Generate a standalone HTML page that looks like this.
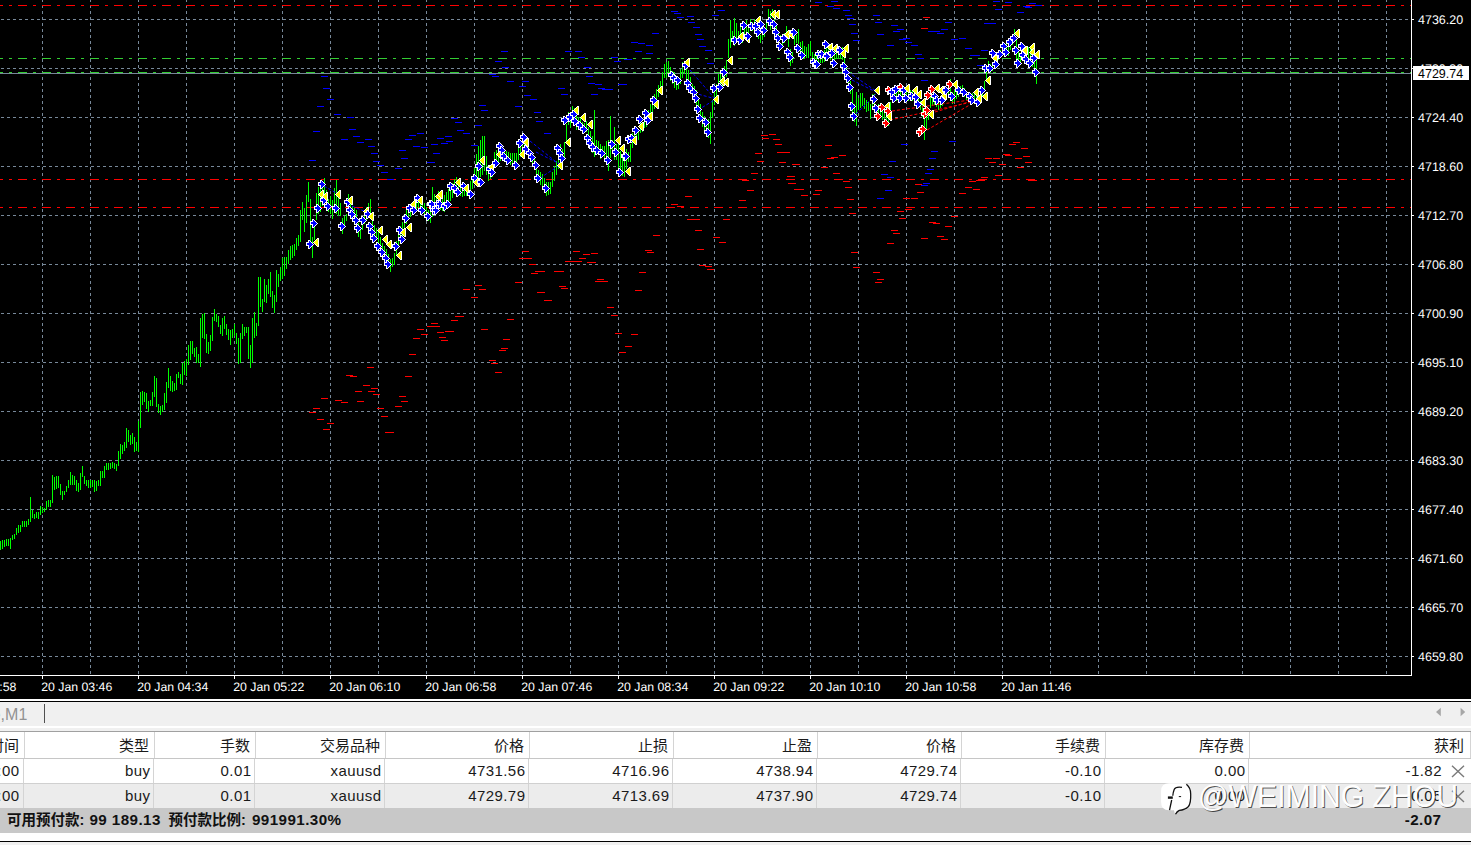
<!DOCTYPE html>
<html lang="zh-CN"><head><meta charset="utf-8"><title>XAUUSD,M1</title>
<style>
html,body{margin:0;padding:0;background:#fff;}
body{width:1471px;height:845px;overflow:hidden;position:relative;font-family:"Liberation Sans","Noto Sans CJK SC",sans-serif;}
.chart{position:absolute;left:0;top:0;display:block}
.chart text{font-family:"Liberation Sans",sans-serif;font-size:12.5px;fill:#fff;}
.chart .lab text{text-rendering:geometricPrecision}
.chart text.bid{fill:#000}
.chart .w{fill:#fff}.chart .b{fill:#00f}.chart .r{fill:#f00}.chart .y{fill:#ff0}
.chart text.tm{font-size:12.3px}
.strip{position:absolute;left:0;width:1471px}
.tab{top:702px;height:24px;background:#f0f0f0}
.tab b{position:absolute;left:-8.3px;top:1.5px;font-weight:normal;font-size:16px;line-height:22px;color:#929292;white-space:nowrap}
.tab b em{font-style:normal;color:#9cc3e6}
.tab i{position:absolute;left:44px;top:2px;width:1px;height:19px;background:#505050}
.hdr{top:732px;height:26px;background:#fff}
.r1{top:759px;height:24px;background:#fff}
.r2{top:784px;height:24px;background:#ececec}
.sum{top:808px;height:25px;background:#c8c8c8}
.vs{position:absolute;top:0;bottom:0;width:1px;background:#d4d4d4}
.hc,.c{position:absolute;white-space:nowrap;color:#1a1a1a;font-size:15px;}
.hc{top:1px;line-height:25px}
.c{top:0;line-height:24px;font-size:15px;letter-spacing:.42px;margin-right:-.42px}
.sum span{position:absolute;top:0;line-height:24px;font-weight:bold;font-size:14.5px;color:#111;white-space:nowrap}
.sum span.n{font-size:15.2px;letter-spacing:.42px}
.wm{position:absolute;left:1197.5px;top:777.5px;font-size:32px;line-height:36px;color:#fff;white-space:nowrap;transform-origin:0 0;transform:scaleX(.942);text-shadow:1px 1px 0 rgba(0,0,0,.7);opacity:.95}
</style></head><body>
<svg class="chart" width="1471" height="699" viewBox="0 0 1471 699" shape-rendering="crispEdges">
<rect width="1471" height="699" fill="#000"/>
<path d="M42.5 -1V674M90.5 -1V674M138.5 -1V674M186.5 -1V674M234.5 -1V674M282.5 -1V674M330.5 -1V674M378.5 -1V674M426.5 -1V674M474.5 -1V674M522.5 -1V674M570.5 -1V674M618.5 -1V674M666.5 -1V674M714.5 -1V674M762.5 -1V674M810.5 -1V674M858.5 -1V674M906.5 -1V674M954.5 -1V674M1002.5 -1V674M1050.5 -1V674M1098.5 -1V674M1146.5 -1V674M1194.5 -1V674M1242.5 -1V674M1290.5 -1V674M1338.5 -1V674M1386.5 -1V674" stroke="#789" stroke-dasharray="3 3" fill="none"/>
<path d="M1 19.5H1408M1 68.5H1408M1 117.5H1408M1 166.5H1408M1 215.5H1408M1 264.5H1408M1 313.5H1408M1 362.5H1408M1 411.5H1408M1 460.5H1408M1 509.5H1408M1 558.5H1408M1 607.5H1408M1 656.5H1408" stroke="#789" stroke-dasharray="3 3" fill="none"/>
<g stroke-dasharray="9 6 3 6" fill="none">
<path d="M-6 5.5H1411M-6 179.5H1411M-6 207.5H1411" stroke="#f00"/>
<path d="M-6 58.5H1411M-6 72.5H1411" stroke="#32cd32"/>
</g>
<path d="M0 73.5H1411" stroke="#789"/>
<path d="M0.5 541V550M2.5 540V549M4.5 540V547M6.5 539V546M8.5 539V546M10.5 538V549M12.5 535V540M14.5 534V539M16.5 528V535M18.5 525V533M20.5 525V532M22.5 521V527M24.5 521V527M26.5 521V527M28.5 519V525M30.5 497V522M32.5 510V518M34.5 514V519M36.5 512V518M38.5 512V519M40.5 506V515M42.5 507V513M44.5 508V512M46.5 501V510M48.5 500V507M50.5 500V507M52.5 475V503M54.5 477V490M56.5 476V489M58.5 476V488M60.5 484V495M62.5 491V500M64.5 491V495M66.5 486V492M68.5 480V488M70.5 472V485M72.5 475V485M74.5 476V485M76.5 480V491M78.5 483V492M80.5 473V490M82.5 466V477M84.5 476V484M86.5 480V486M88.5 480V488M90.5 480V488M92.5 480V487M94.5 480V492M96.5 481V491M98.5 480V486M100.5 471V486M102.5 471V478M104.5 466V478M106.5 463V470M108.5 463V470M110.5 463V469M112.5 462V468M114.5 463V469M116.5 464V471M118.5 451V466M120.5 444V459M122.5 445V454M124.5 442V451M126.5 428V448M128.5 430V442M130.5 435V445M132.5 433V444M134.5 437V452M136.5 442V451M138.5 421V452M140.5 392V428M142.5 391V405M144.5 392V402M146.5 393V409M148.5 401V412M150.5 400V406M152.5 392V406M154.5 376V397M156.5 378V407M158.5 404V413M160.5 406V415M162.5 405V412M164.5 393V410M166.5 382V403M168.5 368V388M170.5 376V391M172.5 381V392M174.5 383V391M176.5 374V390M178.5 372V378M180.5 374V384M182.5 363V385M184.5 361V375M186.5 359V376M188.5 345V365M190.5 341V360M192.5 341V354M194.5 348V357M196.5 347V363M198.5 354V363M200.5 318V367M202.5 314V338M204.5 313V339M206.5 334V353M208.5 342V354M210.5 335V351M212.5 317V341M214.5 309V321M216.5 314V322M218.5 316V327M220.5 325V334M222.5 318V336M224.5 316V329M226.5 324V335M228.5 329V340M230.5 330V345M232.5 329V338M234.5 324V336M236.5 333V344M238.5 338V364M240.5 333V363M242.5 324V339M244.5 327V336M246.5 327V333M248.5 327V359M250.5 345V368M252.5 318V363M254.5 312V338M256.5 323V336M258.5 277V326M260.5 277V307M262.5 299V312M264.5 279V302M266.5 285V303M268.5 279V294M270.5 272V297M272.5 291V308M274.5 295V313M276.5 270V302M278.5 274V287M280.5 267V281M282.5 258V279M284.5 257V276M286.5 257V269M288.5 250V264M290.5 246V260M292.5 245V258M294.5 244V256M296.5 238V250M298.5 235V246M300.5 210V242M302.5 202V220M304.5 208V232M306.5 195V223M308.5 182V202M310.5 199V244M312.5 237V258M314.5 226V240M316.5 193V220M318.5 187V214M320.5 180V212M322.5 188V206M324.5 178V200M326.5 190V208M328.5 199V212M330.5 196V214M332.5 200V219M334.5 188V212M336.5 180V214M338.5 196V216M340.5 203V216M342.5 218V234M344.5 216V226M346.5 214V221M348.5 194V206M350.5 201V212M352.5 206V216M354.5 208V218M356.5 210V222M358.5 223V237M360.5 227V239M362.5 219V230M364.5 211V224M366.5 207V220M368.5 203V218M370.5 199V217M372.5 215V228M374.5 225V237M376.5 228V239M378.5 231V243M380.5 237V248M382.5 243V255M384.5 246V258M386.5 249V262M388.5 254V268M390.5 259V272M392.5 258V267M394.5 253V265M396.5 241V256M398.5 230V248M400.5 226V243M402.5 222V238M404.5 215V230M406.5 209V224M408.5 205V220M410.5 205V217M412.5 203V214M414.5 201V212M416.5 199V210M418.5 197V208M420.5 199V210M422.5 201V212M424.5 203V214M426.5 207V218M428.5 210V221M430.5 212V223M432.5 187V217M434.5 194V211M436.5 195V210M438.5 191V208M440.5 194V210M442.5 196V211M444.5 195V212M446.5 192V207M448.5 189V204M450.5 188V201M452.5 183V198M454.5 179V194M456.5 177V192M458.5 179V194M460.5 182V196M462.5 184V197M464.5 185V196M466.5 185V196M468.5 185V195M470.5 181V192M472.5 178V189M474.5 168V183M476.5 154V182M478.5 146V179M480.5 140V177M482.5 136V175M484.5 136V171M486.5 156V175M488.5 170V181M490.5 168V179M492.5 166V177M494.5 152V168M496.5 150V165M498.5 147V162M500.5 146V161M502.5 147V161M504.5 149V161M506.5 151V162M508.5 152V164M510.5 153V165M512.5 153V166M514.5 153V167M516.5 153V167M518.5 145V160M520.5 142V157M522.5 136V150M524.5 135V148M526.5 141V153M528.5 146V157M530.5 151V161M532.5 155V165M534.5 159V169M536.5 164V175M538.5 170V181M540.5 172V185M542.5 174V189M544.5 178V193M546.5 182V196M548.5 182V195M550.5 182V194M552.5 172V187M554.5 166V181M556.5 161V175M558.5 158V169M560.5 144V155M562.5 149V163M564.5 142V158M566.5 124V143M568.5 112V125M570.5 113V128M572.5 106V114M574.5 108V118M576.5 116V130M578.5 117V126M580.5 118V128M582.5 122V130M584.5 123V130M586.5 121V132M588.5 127V136M590.5 131V140M592.5 136V153M594.5 110V157M596.5 140V155M598.5 141V151M600.5 144V159M602.5 146V155M604.5 146V158M606.5 141V158M608.5 140V171M610.5 116V158M612.5 140V152M614.5 127V160M616.5 144V160M618.5 144V170M620.5 151V172M622.5 155V176M624.5 154V177M626.5 149V169M628.5 152V162M630.5 144V162M632.5 133V148M634.5 131V144M636.5 127V140M638.5 130V140M640.5 121V133M642.5 125V132M644.5 118V128M646.5 122V127M648.5 110V122M650.5 104V119M652.5 98V113M654.5 94V109M656.5 89V102M658.5 85V97M660.5 81V93M662.5 72V86M664.5 64V78M666.5 62V78M668.5 61V75M670.5 67V81M672.5 71V84M674.5 73V88M676.5 76V90M678.5 77V89M680.5 69V84M682.5 62V78M684.5 61V74M686.5 65V80M688.5 70V86M690.5 77V92M692.5 84V98M694.5 86V101M696.5 90V106M698.5 97V112M700.5 104V119M702.5 112V127M704.5 116V132M706.5 120V135M708.5 119V138M710.5 112V144M712.5 100V118M714.5 90V105M716.5 84V98M718.5 74V90M720.5 72V87M722.5 72V86M724.5 66V81M726.5 60V77M728.5 39V58M730.5 20V48M732.5 31V40M734.5 18V46M736.5 23V39M738.5 31V38M740.5 27V36M742.5 32V43M744.5 26V38M746.5 20V34M748.5 26V33M750.5 19V30M752.5 22V31M754.5 19V27M756.5 24V34M758.5 32V39M760.5 35V43M762.5 31V40M764.5 30V37M766.5 20V31M768.5 9V26M770.5 11V30M772.5 9V18M774.5 16V25M776.5 26V30M778.5 32V36M780.5 35V38M782.5 38V48M784.5 33V43M786.5 26V34M788.5 38V47M790.5 49V66M792.5 52V63M794.5 34V45M796.5 35V43M798.5 29V44M800.5 42V55M802.5 41V56M804.5 46V59M806.5 47V58M808.5 44V58M810.5 41V56M812.5 52V64M814.5 54V61M816.5 55V62M818.5 56V63M820.5 53V63M822.5 51V63M824.5 50V62M826.5 47V59M828.5 48V59M830.5 50V60M832.5 51V60M834.5 51V61M836.5 49V59M838.5 48V58M840.5 48V59M842.5 47V60M844.5 58V66M846.5 66V75M848.5 75V85M850.5 81V94M852.5 86V120M854.5 104V122M856.5 92V126M858.5 98V110M860.5 93V108M862.5 93V106M864.5 98V109M866.5 100V112M868.5 102V111M870.5 104V119M872.5 94V109M874.5 94V104M876.5 107V120M878.5 104V116M880.5 107V118M882.5 109V120M884.5 113V123M886.5 108V120M888.5 114V126M890.5 102V111M892.5 93V103M894.5 91V101M896.5 90V101M898.5 89V100M900.5 89V99M902.5 89V100M904.5 90V101M906.5 92V102M908.5 91V101M910.5 90V101M912.5 91V101M914.5 93V103M916.5 95V104M918.5 98V107M920.5 101V110M922.5 105V117M924.5 111V140M926.5 114V129M928.5 108V120M930.5 93V108M932.5 94V106M934.5 95V105M936.5 96V107M938.5 98V110M940.5 97V108M942.5 95V106M944.5 91V102M946.5 89V99M948.5 85V96M950.5 79V93M952.5 92V104M954.5 90V102M956.5 89V99M958.5 88V97M960.5 86V94M962.5 85V95M964.5 88V97M966.5 91V100M968.5 93V101M970.5 93V102M972.5 93V102M974.5 94V103M976.5 96V105M978.5 94V103M980.5 92V102M982.5 88V97M984.5 81V92M986.5 69V79M988.5 61V72M990.5 64V73M992.5 62V71M994.5 59V68M996.5 53V62M998.5 51V60M1000.5 50V58M1002.5 46V55M1004.5 45V54M1006.5 44V54M1008.5 42V56M1010.5 39V50M1012.5 36V45M1014.5 29V41M1016.5 38V67M1018.5 50V65M1020.5 53V65M1022.5 50V60M1024.5 49V57M1026.5 53V61M1028.5 47V64M1030.5 47V62M1032.5 53V67M1034.5 58V69M1036.5 57V84" stroke="#0f0" fill="none"/>
<path d="M321 76.5h7M323 88.5h7M327 99.5h7M317 106.5h7M334 114.5h7M347 117.5h7M349 129.5h7M313 131.5h7M353 136.5h7M341 139.5h7M365 139.5h7M357 142.5h7M368 146.5h7M371 153.5h7M373 161.5h7M377 165.5h7M381 172.5h7M387 179.5h7M309 160.5h7M395 168.5h7M401 158.5h7M399 150.5h7M405 139.5h7M409 135.5h7M417 133.5h7M413 146.5h7M421 147.5h7M427 162.5h7M433 153.5h7M431 144.5h7M437 138.5h7M441 143.5h7M445 136.5h7M451 118.5h7M455 122.5h7M457 130.5h7M463 133.5h7M471 145.5h7M475 125.5h7M479 105.5h7M481 110.5h7M501 51.5h7M495 61.5h7M502 67.5h7M489 74.5h7M492 76.5h7M507 81.5h7M522 81.5h7M519 86.5h7M524 95.5h7M530 99.5h7M515 106.5h7M534 112.5h7M536 121.5h7M544 133.5h7M446 141.5h7M428 162.5h7M565 51.5h7M575 51.5h7M578 57.5h7M584 67.5h7M586 76.5h7M588 83.5h7M595 84.5h7M598 88.5h7M602 89.5h11M591 94.5h7M558 88.5h7M561 94.5h7M611 57.5h7M614 61.5h7M618 84.5h7M624 59.5h7M671 11.5h7M674 13.5h7M687 16.5h7M677 17.5h7M688 22.5h7M693 27.5h7M695 34.5h7M697 39.5h7M699 46.5h7M705 50.5h7M707 63.5h7M652 33.5h7M631 42.5h7M638 43.5h7M646 45.5h7M635 51.5h7M646 53.5h7M625 59.5h7M620 84.5h7M718 10.5h7M712 15.5h7M815 2.5h7M831 1.5h7M827 6.5h7M833 8.5h7M843 10.5h7M845 15.5h7M847 18.5h7M849 24.5h7M851 33.5h7M853 40.5h7M873 15.5h7M875 22.5h7M877 34.5h7M887 45.5h7M891 25.5h7M897 29.5h7M893 31.5h7M899 39.5h7M903 38.5h7M905 42.5h7M911 45.5h7M945 22.5h7M941 29.5h7M928 31.5h12M937 33.5h7M951 39.5h7M959 38.5h7M965 48.5h7M993 1.5h7M1005 2.5h7M1029 3.5h7M1023 6.5h7M1025 7.5h7M1035 5.5h7M995 9.5h7M1017 12.5h7M984 23.5h12M981 50.5h7M970 55.5h10M977 65.5h7M915 54.5h7M917 58.5h7M921 80.5h7M901 144.5h7M949 141.5h7M931 151.5h7M929 158.5h7M889 161.5h7M927 169.5h7M925 173.5h7M881 174.5h7M887 177.5h7M923 183.5h7M921 185.5h7M885 190.5h7M877 198.5h7" stroke="#00f" fill="none"/>
<path d="M522 251.5h7M519 258.5h13M529 264.5h7M535 271.5h7M531 273.5h7M515 282.5h7M537 292.5h7M544 300.5h7M554 271.5h7M475 285.5h7M463 289.5h7M479 289.5h7M471 297.5h7M455 316.5h9M451 320.5h7M431 323.5h7M427 326.5h13M417 329.5h7M437 332.5h7M445 331.5h9M421 334.5h7M439 337.5h7M413 338.5h7M441 340.5h7M409 354.5h7M481 329.5h7M507 319.5h7M503 339.5h7M501 348.5h7M499 350.5h7M489 360.5h7M491 363.5h7M495 372.5h7M367 367.5h7M346 375.5h7M350 376.5h7M405 376.5h7M363 385.5h7M371 388.5h7M355 391.5h7M368 391.5h7M373 394.5h7M399 396.5h7M321 398.5h7M335 400.5h7M341 402.5h7M357 401.5h7M401 401.5h7M395 406.5h7M377 408.5h7M313 408.5h7M309 412.5h7M381 416.5h7M317 419.5h7M327 423.5h7M323 429.5h7M385 432.5h9M761 135.5h7M769 134.5h7M762 138.5h7M773 139.5h7M775 144.5h7M777 152.5h13M755 153.5h7M757 161.5h7M779 162.5h7M792 164.5h7M751 173.5h7M787 176.5h7M786 179.5h9M742 180.5h7M789 183.5h7M794 189.5h7M747 190.5h7M739 200.5h7M685 196.5h7M671 204.5h7M677 206.5h7M723 219.5h7M687 219.5h13M695 230.5h7M713 237.5h7M719 242.5h7M697 249.5h7M653 235.5h7M645 250.5h7M647 252.5h7M573 251.5h7M583 254.5h7M591 253.5h7M579 258.5h7M565 261.5h17M587 262.5h9M699 265.5h7M705 266.5h7M707 269.5h7M557 271.5h7M639 272.5h7M597 279.5h7M595 281.5h13M559 286.5h7M561 288.5h7M635 290.5h7M538 292.5h7M545 300.5h7M607 307.5h7M611 315.5h7M538 271.5h7M615 333.5h7M631 334.5h7M625 346.5h7M619 352.5h7M825 145.5h7M839 155.5h7M831 157.5h7M827 158.5h7M793 164.5h7M821 167.5h7M833 173.5h7M788 176.5h7M843 181.5h7M788 183.5h7M845 187.5h7M797 189.5h7M815 190.5h7M813 194.5h7M801 195.5h7M847 199.5h7M849 213.5h7M851 252.5h7M853 267.5h7M873 272.5h7M877 279.5h7M875 282.5h7M915 184.5h7M917 192.5h7M903 198.5h7M911 198.5h7M905 209.5h7M897 211.5h7M899 218.5h7M891 230.5h7M893 233.5h7M887 243.5h7M921 238.5h7M929 222.5h7M933 223.5h7M945 226.5h7M937 236.5h7M941 239.5h7M951 216.5h7M959 193.5h7M965 187.5h7M973 189.5h7M969 181.5h7M976 180.5h9M981 177.5h7M995 175.5h7M985 158.5h7M993 158.5h7M989 162.5h7M999 164.5h7M1003 154.5h7M1005 155.5h7M1009 144.5h7M1013 142.5h7M1021 148.5h7M1023 156.5h7M1015 158.5h7M1025 162.5h7M1017 167.5h7M1028 180.5h9M923 17.5h7M921 28.5h7" stroke="#f00" fill="none"/>
<g stroke-dasharray="3 2" shape-rendering="auto" stroke-width="1"><line x1="892" y1="111" x2="970" y2="100" stroke="#f00"/><line x1="890" y1="120" x2="972" y2="102" stroke="#f00"/><line x1="927" y1="130" x2="973" y2="103" stroke="#f00"/><line x1="935" y1="112" x2="972" y2="101" stroke="#f00"/><line x1="848" y1="72" x2="876" y2="91" stroke="#00f"/><line x1="852" y1="80" x2="876" y2="92" stroke="#00f"/><line x1="856" y1="114" x2="876" y2="94" stroke="#00f"/><line x1="690" y1="70" x2="716" y2="100" stroke="#00f"/><line x1="698" y1="110" x2="716" y2="99" stroke="#00f"/><line x1="694" y1="93" x2="716" y2="99" stroke="#00f"/><line x1="530" y1="141" x2="560" y2="165" stroke="#00f"/><line x1="540" y1="178" x2="560" y2="165" stroke="#00f"/><line x1="536" y1="152" x2="560" y2="164" stroke="#00f"/><line x1="324" y1="186" x2="338" y2="194" stroke="#00f"/><line x1="352" y1="206" x2="366" y2="212" stroke="#00f"/></g>
<path class="w" d="M308 240h2v1h1v1h1v1h1v1h1v1h-1v1h-1v1h-1v1h-1v1h-2v-3h-2v-4h2z"/><path class="b" d="M309 241h1v1h1v1h1v1h1v1h-1v1h-1v1h-1v1h-1v-3h-2v-2h2z"/><path class="w" d="M312 219h2v1h1v1h1v1h1v1h1v1h-1v1h-1v1h-1v1h-1v1h-2v-3h-2v-4h2z"/><path class="b" d="M313 220h1v1h1v1h1v1h1v1h-1v1h-1v1h-1v1h-1v-3h-2v-2h2z"/><path class="w" d="M317 238h2v9h-2v-1h-1v-1h-1v-1h-1v-1h-1v-1h1v-1h1v-1h1v-1h1z"/><path class="y" d="M317 239h1v7h-1v-1h-1v-1h-1v-1h-1v-1h1v-1h1v-1h1z"/><path class="w" d="M316 204h2v1h1v1h1v1h1v1h1v1h-1v1h-1v1h-1v1h-1v1h-2v-3h-2v-4h2z"/><path class="b" d="M317 205h1v1h1v1h1v1h1v1h-1v1h-1v1h-1v1h-1v-3h-2v-2h2z"/><path class="w" d="M322 190h2v9h-2v-1h-1v-1h-1v-1h-1v-1h-1v-1h1v-1h1v-1h1v-1h1z"/><path class="y" d="M322 191h1v7h-1v-1h-1v-1h-1v-1h-1v-1h1v-1h1v-1h1z"/><path class="w" d="M320 180h2v1h1v1h1v1h1v1h1v1h-1v1h-1v1h-1v1h-1v1h-2v-3h-2v-4h2z"/><path class="b" d="M321 181h1v1h1v1h1v1h1v1h-1v1h-1v1h-1v1h-1v-3h-2v-2h2z"/><path class="w" d="M322 196h2v1h1v1h1v1h1v1h1v1h-1v1h-1v1h-1v1h-1v1h-2v-3h-2v-4h2z"/><path class="b" d="M323 197h1v1h1v1h1v1h1v1h-1v1h-1v1h-1v1h-1v-3h-2v-2h2z"/><path class="w" d="M326 192h2v9h-2v-1h-1v-1h-1v-1h-1v-1h-1v-1h1v-1h1v-1h1v-1h1z"/><path class="y" d="M326 193h1v7h-1v-1h-1v-1h-1v-1h-1v-1h1v-1h1v-1h1z"/><path class="w" d="M326 202h2v1h1v1h1v1h1v1h1v1h-1v1h-1v1h-1v1h-1v1h-2v-3h-2v-4h2z"/><path class="b" d="M327 203h1v1h1v1h1v1h1v1h-1v1h-1v1h-1v1h-1v-3h-2v-2h2z"/><path class="w" d="M334 204h2v1h1v1h1v1h1v1h1v1h-1v1h-1v1h-1v1h-1v1h-2v-3h-2v-4h2z"/><path class="b" d="M335 205h1v1h1v1h1v1h1v1h-1v1h-1v1h-1v1h-1v-3h-2v-2h2z"/><path class="w" d="M339 190h2v9h-2v-1h-1v-1h-1v-1h-1v-1h-1v-1h1v-1h1v-1h1v-1h1z"/><path class="y" d="M339 191h1v7h-1v-1h-1v-1h-1v-1h-1v-1h1v-1h1v-1h1z"/><path class="w" d="M340 222h2v1h1v1h1v1h1v1h1v1h-1v1h-1v1h-1v1h-1v1h-2v-3h-2v-4h2z"/><path class="b" d="M341 223h1v1h1v1h1v1h1v1h-1v1h-1v1h-1v1h-1v-3h-2v-2h2z"/><path class="w" d="M346 198h2v1h1v1h1v1h1v1h1v1h-1v1h-1v1h-1v1h-1v1h-2v-3h-2v-4h2z"/><path class="b" d="M347 199h1v1h1v1h1v1h1v1h-1v1h-1v1h-1v1h-1v-3h-2v-2h2z"/><path class="w" d="M348 206h2v1h1v1h1v1h1v1h1v1h-1v1h-1v1h-1v1h-1v1h-2v-3h-2v-4h2z"/><path class="b" d="M349 207h1v1h1v1h1v1h1v1h-1v1h-1v1h-1v1h-1v-3h-2v-2h2z"/><path class="w" d="M351 196h2v9h-2v-1h-1v-1h-1v-1h-1v-1h-1v-1h1v-1h1v-1h1v-1h1z"/><path class="y" d="M351 197h1v7h-1v-1h-1v-1h-1v-1h-1v-1h1v-1h1v-1h1z"/><path class="w" d="M350 210h2v1h1v1h1v1h1v1h1v1h-1v1h-1v1h-1v1h-1v1h-2v-3h-2v-4h2z"/><path class="b" d="M351 211h1v1h1v1h1v1h1v1h-1v1h-1v1h-1v1h-1v-3h-2v-2h2z"/><path class="w" d="M354 216h2v1h1v1h1v1h1v1h1v1h-1v1h-1v1h-1v1h-1v1h-2v-3h-2v-4h2z"/><path class="b" d="M355 217h1v1h1v1h1v1h1v1h-1v1h-1v1h-1v1h-1v-3h-2v-2h2z"/><path class="w" d="M356 224h2v1h1v1h1v1h1v1h1v1h-1v1h-1v1h-1v1h-1v1h-2v-3h-2v-4h2z"/><path class="b" d="M357 225h1v1h1v1h1v1h1v1h-1v1h-1v1h-1v1h-1v-3h-2v-2h2z"/><path class="w" d="M361 216h2v1h1v1h1v1h1v1h1v1h-1v1h-1v1h-1v1h-1v1h-2v-3h-2v-4h2z"/><path class="b" d="M362 217h1v1h1v1h1v1h1v1h-1v1h-1v1h-1v1h-1v-3h-2v-2h2z"/><path class="w" d="M367 207h2v9h-2v-1h-1v-1h-1v-1h-1v-1h-1v-1h1v-1h1v-1h1v-1h1z"/><path class="y" d="M367 208h1v7h-1v-1h-1v-1h-1v-1h-1v-1h1v-1h1v-1h1z"/><path class="w" d="M366 210h2v1h1v1h1v1h1v1h1v1h-1v1h-1v1h-1v1h-1v1h-2v-3h-2v-4h2z"/><path class="b" d="M367 211h1v1h1v1h1v1h1v1h-1v1h-1v1h-1v1h-1v-3h-2v-2h2z"/><path class="w" d="M368 222h2v1h1v1h1v1h1v1h1v1h-1v1h-1v1h-1v1h-1v1h-2v-3h-2v-4h2z"/><path class="b" d="M369 223h1v1h1v1h1v1h1v1h-1v1h-1v1h-1v1h-1v-3h-2v-2h2z"/><path class="w" d="M372 212h2v9h-2v-1h-1v-1h-1v-1h-1v-1h-1v-1h1v-1h1v-1h1v-1h1z"/><path class="y" d="M372 213h1v7h-1v-1h-1v-1h-1v-1h-1v-1h1v-1h1v-1h1z"/><path class="w" d="M370 228h2v1h1v1h1v1h1v1h1v1h-1v1h-1v1h-1v1h-1v1h-2v-3h-2v-4h2z"/><path class="b" d="M371 229h1v1h1v1h1v1h1v1h-1v1h-1v1h-1v1h-1v-3h-2v-2h2z"/><path class="w" d="M372 234h2v1h1v1h1v1h1v1h1v1h-1v1h-1v1h-1v1h-1v1h-2v-3h-2v-4h2z"/><path class="b" d="M373 235h1v1h1v1h1v1h1v1h-1v1h-1v1h-1v1h-1v-3h-2v-2h2z"/><path class="w" d="M376 242h2v1h1v1h1v1h1v1h1v1h-1v1h-1v1h-1v1h-1v1h-2v-3h-2v-4h2z"/><path class="b" d="M377 243h1v1h1v1h1v1h1v1h-1v1h-1v1h-1v1h-1v-3h-2v-2h2z"/><path class="w" d="M381 226h2v9h-2v-1h-1v-1h-1v-1h-1v-1h-1v-1h1v-1h1v-1h1v-1h1z"/><path class="y" d="M381 227h1v7h-1v-1h-1v-1h-1v-1h-1v-1h1v-1h1v-1h1z"/><path class="w" d="M380 248h2v1h1v1h1v1h1v1h1v1h-1v1h-1v1h-1v1h-1v1h-2v-3h-2v-4h2z"/><path class="b" d="M381 249h1v1h1v1h1v1h1v1h-1v1h-1v1h-1v1h-1v-3h-2v-2h2z"/><path class="w" d="M386 235h2v9h-2v-1h-1v-1h-1v-1h-1v-1h-1v-1h1v-1h1v-1h1v-1h1z"/><path class="y" d="M386 236h1v7h-1v-1h-1v-1h-1v-1h-1v-1h1v-1h1v-1h1z"/><path class="w" d="M384 254h2v1h1v1h1v1h1v1h1v1h-1v1h-1v1h-1v1h-1v1h-2v-3h-2v-4h2z"/><path class="b" d="M385 255h1v1h1v1h1v1h1v1h-1v1h-1v1h-1v1h-1v-3h-2v-2h2z"/><path class="w" d="M390 240h2v9h-2v-1h-1v-1h-1v-1h-1v-1h-1v-1h1v-1h1v-1h1v-1h1z"/><path class="y" d="M390 241h1v7h-1v-1h-1v-1h-1v-1h-1v-1h1v-1h1v-1h1z"/><path class="w" d="M386 260h2v1h1v1h1v1h1v1h1v1h-1v1h-1v1h-1v1h-1v1h-2v-3h-2v-4h2z"/><path class="b" d="M387 261h1v1h1v1h1v1h1v1h-1v1h-1v1h-1v1h-1v-3h-2v-2h2z"/><path class="w" d="M394 242h2v1h1v1h1v1h1v1h1v1h-1v1h-1v1h-1v1h-1v1h-2v-3h-2v-4h2z"/><path class="b" d="M395 243h1v1h1v1h1v1h1v1h-1v1h-1v1h-1v1h-1v-3h-2v-2h2z"/><path class="w" d="M400 251h2v9h-2v-1h-1v-1h-1v-1h-1v-1h-1v-1h1v-1h1v-1h1v-1h1z"/><path class="y" d="M400 252h1v7h-1v-1h-1v-1h-1v-1h-1v-1h1v-1h1v-1h1z"/><path class="w" d="M398 226h2v1h1v1h1v1h1v1h1v1h-1v1h-1v1h-1v1h-1v1h-2v-3h-2v-4h2z"/><path class="b" d="M399 227h1v1h1v1h1v1h1v1h-1v1h-1v1h-1v1h-1v-3h-2v-2h2z"/><path class="w" d="M400 235h2v1h1v1h1v1h1v1h1v1h-1v1h-1v1h-1v1h-1v1h-2v-3h-2v-4h2z"/><path class="b" d="M401 236h1v1h1v1h1v1h1v1h-1v1h-1v1h-1v1h-1v-3h-2v-2h2z"/><path class="w" d="M404 228h2v9h-2v-1h-1v-1h-1v-1h-1v-1h-1v-1h1v-1h1v-1h1v-1h1z"/><path class="y" d="M404 229h1v7h-1v-1h-1v-1h-1v-1h-1v-1h1v-1h1v-1h1z"/><path class="w" d="M404 214h2v1h1v1h1v1h1v1h1v1h-1v1h-1v1h-1v1h-1v1h-2v-3h-2v-4h2z"/><path class="b" d="M405 215h1v1h1v1h1v1h1v1h-1v1h-1v1h-1v1h-1v-3h-2v-2h2z"/><path class="w" d="M410 223h2v9h-2v-1h-1v-1h-1v-1h-1v-1h-1v-1h1v-1h1v-1h1v-1h1z"/><path class="y" d="M410 224h1v7h-1v-1h-1v-1h-1v-1h-1v-1h1v-1h1v-1h1z"/><path class="w" d="M408 204h2v1h1v1h1v1h1v1h1v1h-1v1h-1v1h-1v1h-1v1h-2v-3h-2v-4h2z"/><path class="b" d="M409 205h1v1h1v1h1v1h1v1h-1v1h-1v1h-1v1h-1v-3h-2v-2h2z"/><path class="w" d="M414 200h2v9h-2v-1h-1v-1h-1v-1h-1v-1h-1v-1h1v-1h1v-1h1v-1h1z"/><path class="y" d="M414 201h1v7h-1v-1h-1v-1h-1v-1h-1v-1h1v-1h1v-1h1z"/><path class="w" d="M412 206h2v1h1v1h1v1h1v1h1v1h-1v1h-1v1h-1v1h-1v1h-2v-3h-2v-4h2z"/><path class="b" d="M413 207h1v1h1v1h1v1h1v1h-1v1h-1v1h-1v1h-1v-3h-2v-2h2z"/><path class="w" d="M416 194h2v1h1v1h1v1h1v1h1v1h-1v1h-1v1h-1v1h-1v1h-2v-3h-2v-4h2z"/><path class="b" d="M417 195h1v1h1v1h1v1h1v1h-1v1h-1v1h-1v1h-1v-3h-2v-2h2z"/><path class="w" d="M421 196h2v9h-2v-1h-1v-1h-1v-1h-1v-1h-1v-1h1v-1h1v-1h1v-1h1z"/><path class="y" d="M421 197h1v7h-1v-1h-1v-1h-1v-1h-1v-1h1v-1h1v-1h1z"/><path class="w" d="M420 206h2v1h1v1h1v1h1v1h1v1h-1v1h-1v1h-1v1h-1v1h-2v-3h-2v-4h2z"/><path class="b" d="M421 207h1v1h1v1h1v1h1v1h-1v1h-1v1h-1v1h-1v-3h-2v-2h2z"/><path class="w" d="M426 212h2v1h1v1h1v1h1v1h1v1h-1v1h-1v1h-1v1h-1v1h-2v-3h-2v-4h2z"/><path class="b" d="M427 213h1v1h1v1h1v1h1v1h-1v1h-1v1h-1v1h-1v-3h-2v-2h2z"/><path class="w" d="M429 200h2v1h1v1h1v1h1v1h1v1h-1v1h-1v1h-1v1h-1v1h-2v-3h-2v-4h2z"/><path class="b" d="M430 201h1v1h1v1h1v1h1v1h-1v1h-1v1h-1v1h-1v-3h-2v-2h2z"/><path class="w" d="M430 200h2v1h1v1h1v1h1v1h1v1h-1v1h-1v1h-1v1h-1v1h-2v-3h-2v-4h2z"/><path class="b" d="M431 201h1v1h1v1h1v1h1v1h-1v1h-1v1h-1v1h-1v-3h-2v-2h2z"/><path class="w" d="M432 206h2v1h1v1h1v1h1v1h1v1h-1v1h-1v1h-1v1h-1v1h-2v-3h-2v-4h2z"/><path class="b" d="M433 207h1v1h1v1h1v1h1v1h-1v1h-1v1h-1v1h-1v-3h-2v-2h2z"/><path class="w" d="M434 206h2v1h1v1h1v1h1v1h1v1h-1v1h-1v1h-1v1h-1v1h-2v-3h-2v-4h2z"/><path class="b" d="M435 207h1v1h1v1h1v1h1v1h-1v1h-1v1h-1v1h-1v-3h-2v-2h2z"/><path class="w" d="M439 192h2v9h-2v-1h-1v-1h-1v-1h-1v-1h-1v-1h1v-1h1v-1h1v-1h1z"/><path class="y" d="M439 193h1v7h-1v-1h-1v-1h-1v-1h-1v-1h1v-1h1v-1h1z"/><path class="w" d="M436 200h2v1h1v1h1v1h1v1h1v1h-1v1h-1v1h-1v1h-1v1h-2v-3h-2v-4h2z"/><path class="b" d="M437 201h1v1h1v1h1v1h1v1h-1v1h-1v1h-1v1h-1v-3h-2v-2h2z"/><path class="w" d="M441 190h2v9h-2v-1h-1v-1h-1v-1h-1v-1h-1v-1h1v-1h1v-1h1v-1h1z"/><path class="y" d="M441 191h1v7h-1v-1h-1v-1h-1v-1h-1v-1h1v-1h1v-1h1z"/><path class="w" d="M438 200h2v1h1v1h1v1h1v1h1v1h-1v1h-1v1h-1v1h-1v1h-2v-3h-2v-4h2z"/><path class="b" d="M439 201h1v1h1v1h1v1h1v1h-1v1h-1v1h-1v1h-1v-3h-2v-2h2z"/><path class="w" d="M443 202h2v1h1v1h1v1h1v1h1v1h-1v1h-1v1h-1v1h-1v1h-2v-3h-2v-4h2z"/><path class="b" d="M444 203h1v1h1v1h1v1h1v1h-1v1h-1v1h-1v1h-1v-3h-2v-2h2z"/><path class="w" d="M446 200h2v1h1v1h1v1h1v1h1v1h-1v1h-1v1h-1v1h-1v1h-2v-3h-2v-4h2z"/><path class="b" d="M447 201h1v1h1v1h1v1h1v1h-1v1h-1v1h-1v1h-1v-3h-2v-2h2z"/><path class="w" d="M449 182h2v1h1v1h1v1h1v1h1v1h-1v1h-1v1h-1v1h-1v1h-2v-3h-2v-4h2z"/><path class="b" d="M450 183h1v1h1v1h1v1h1v1h-1v1h-1v1h-1v1h-1v-3h-2v-2h2z"/><path class="w" d="M453 184h2v1h1v1h1v1h1v1h1v1h-1v1h-1v1h-1v1h-1v1h-2v-3h-2v-4h2z"/><path class="b" d="M454 185h1v1h1v1h1v1h1v1h-1v1h-1v1h-1v1h-1v-3h-2v-2h2z"/><path class="w" d="M459 178h2v9h-2v-1h-1v-1h-1v-1h-1v-1h-1v-1h1v-1h1v-1h1v-1h1z"/><path class="y" d="M459 179h1v7h-1v-1h-1v-1h-1v-1h-1v-1h1v-1h1v-1h1z"/><path class="w" d="M456 188h2v1h1v1h1v1h1v1h1v1h-1v1h-1v1h-1v1h-1v1h-2v-3h-2v-4h2z"/><path class="b" d="M457 189h1v1h1v1h1v1h1v1h-1v1h-1v1h-1v1h-1v-3h-2v-2h2z"/><path class="w" d="M462 182h2v1h1v1h1v1h1v1h1v1h-1v1h-1v1h-1v1h-1v1h-2v-3h-2v-4h2z"/><path class="b" d="M463 183h1v1h1v1h1v1h1v1h-1v1h-1v1h-1v1h-1v-3h-2v-2h2z"/><path class="w" d="M467 184h2v9h-2v-1h-1v-1h-1v-1h-1v-1h-1v-1h1v-1h1v-1h1v-1h1z"/><path class="y" d="M467 185h1v7h-1v-1h-1v-1h-1v-1h-1v-1h1v-1h1v-1h1z"/><path class="w" d="M469 190h2v1h1v1h1v1h1v1h1v1h-1v1h-1v1h-1v1h-1v1h-2v-3h-2v-4h2z"/><path class="b" d="M470 191h1v1h1v1h1v1h1v1h-1v1h-1v1h-1v1h-1v-3h-2v-2h2z"/><path class="w" d="M473 174h2v1h1v1h1v1h1v1h1v1h-1v1h-1v1h-1v1h-1v1h-2v-3h-2v-4h2z"/><path class="b" d="M474 175h1v1h1v1h1v1h1v1h-1v1h-1v1h-1v1h-1v-3h-2v-2h2z"/><path class="w" d="M477 178h2v9h-2v-1h-1v-1h-1v-1h-1v-1h-1v-1h1v-1h1v-1h1v-1h1z"/><path class="y" d="M477 179h1v7h-1v-1h-1v-1h-1v-1h-1v-1h1v-1h1v-1h1z"/><path class="w" d="M477 162h2v1h1v1h1v1h1v1h1v1h-1v1h-1v1h-1v1h-1v1h-2v-3h-2v-4h2z"/><path class="b" d="M478 163h1v1h1v1h1v1h1v1h-1v1h-1v1h-1v1h-1v-3h-2v-2h2z"/><path class="w" d="M479 178h2v1h1v1h1v1h1v1h1v1h-1v1h-1v1h-1v1h-1v1h-2v-3h-2v-4h2z"/><path class="b" d="M480 179h1v1h1v1h1v1h1v1h-1v1h-1v1h-1v1h-1v-3h-2v-2h2z"/><path class="w" d="M483 156h2v9h-2v-1h-1v-1h-1v-1h-1v-1h-1v-1h1v-1h1v-1h1v-1h1z"/><path class="y" d="M483 157h1v7h-1v-1h-1v-1h-1v-1h-1v-1h1v-1h1v-1h1z"/><path class="w" d="M488 165h2v1h1v1h1v1h1v1h1v1h-1v1h-1v1h-1v1h-1v1h-2v-3h-2v-4h2z"/><path class="b" d="M489 166h1v1h1v1h1v1h1v1h-1v1h-1v1h-1v1h-1v-3h-2v-2h2z"/><path class="w" d="M492 163h2v9h-2v-1h-1v-1h-1v-1h-1v-1h-1v-1h1v-1h1v-1h1v-1h1z"/><path class="y" d="M492 164h1v7h-1v-1h-1v-1h-1v-1h-1v-1h1v-1h1v-1h1z"/><path class="w" d="M490 168h2v1h1v1h1v1h1v1h1v1h-1v1h-1v1h-1v1h-1v1h-2v-3h-2v-4h2z"/><path class="b" d="M491 169h1v1h1v1h1v1h1v1h-1v1h-1v1h-1v1h-1v-3h-2v-2h2z"/><path class="w" d="M494 159h2v1h1v1h1v1h1v1h1v1h-1v1h-1v1h-1v1h-1v1h-2v-3h-2v-4h2z"/><path class="b" d="M495 160h1v1h1v1h1v1h1v1h-1v1h-1v1h-1v1h-1v-3h-2v-2h2z"/><path class="w" d="M500 150h2v9h-2v-1h-1v-1h-1v-1h-1v-1h-1v-1h1v-1h1v-1h1v-1h1z"/><path class="y" d="M500 151h1v7h-1v-1h-1v-1h-1v-1h-1v-1h1v-1h1v-1h1z"/><path class="w" d="M498 142h2v1h1v1h1v1h1v1h1v1h-1v1h-1v1h-1v1h-1v1h-2v-3h-2v-4h2z"/><path class="b" d="M499 143h1v1h1v1h1v1h1v1h-1v1h-1v1h-1v1h-1v-3h-2v-2h2z"/><path class="w" d="M500 146h2v1h1v1h1v1h1v1h1v1h-1v1h-1v1h-1v1h-1v1h-2v-3h-2v-4h2z"/><path class="b" d="M501 147h1v1h1v1h1v1h1v1h-1v1h-1v1h-1v1h-1v-3h-2v-2h2z"/><path class="w" d="M502 152h2v1h1v1h1v1h1v1h1v1h-1v1h-1v1h-1v1h-1v1h-2v-3h-2v-4h2z"/><path class="b" d="M503 153h1v1h1v1h1v1h1v1h-1v1h-1v1h-1v1h-1v-3h-2v-2h2z"/><path class="w" d="M506 156h2v1h1v1h1v1h1v1h1v1h-1v1h-1v1h-1v1h-1v1h-2v-3h-2v-4h2z"/><path class="b" d="M507 157h1v1h1v1h1v1h1v1h-1v1h-1v1h-1v1h-1v-3h-2v-2h2z"/><path class="w" d="M514 161h2v1h1v1h1v1h1v1h1v1h-1v1h-1v1h-1v1h-1v1h-2v-3h-2v-4h2z"/><path class="b" d="M515 162h1v1h1v1h1v1h1v1h-1v1h-1v1h-1v1h-1v-3h-2v-2h2z"/><path class="w" d="M518 139h2v1h1v1h1v1h1v1h1v1h-1v1h-1v1h-1v1h-1v1h-2v-3h-2v-4h2z"/><path class="b" d="M519 140h1v1h1v1h1v1h1v1h-1v1h-1v1h-1v1h-1v-3h-2v-2h2z"/><path class="w" d="M523 150h2v9h-2v-1h-1v-1h-1v-1h-1v-1h-1v-1h1v-1h1v-1h1v-1h1z"/><path class="y" d="M523 151h1v7h-1v-1h-1v-1h-1v-1h-1v-1h1v-1h1v-1h1z"/><path class="w" d="M522 133h2v1h1v1h1v1h1v1h1v1h-1v1h-1v1h-1v1h-1v1h-2v-3h-2v-4h2z"/><path class="b" d="M523 134h1v1h1v1h1v1h1v1h-1v1h-1v1h-1v1h-1v-3h-2v-2h2z"/><path class="w" d="M527 138h2v9h-2v-1h-1v-1h-1v-1h-1v-1h-1v-1h1v-1h1v-1h1v-1h1z"/><path class="y" d="M527 139h1v7h-1v-1h-1v-1h-1v-1h-1v-1h1v-1h1v-1h1z"/><path class="w" d="M524 145h2v1h1v1h1v1h1v1h1v1h-1v1h-1v1h-1v1h-1v1h-2v-3h-2v-4h2z"/><path class="b" d="M525 146h1v1h1v1h1v1h1v1h-1v1h-1v1h-1v1h-1v-3h-2v-2h2z"/><path class="w" d="M528 149h2v1h1v1h1v1h1v1h1v1h-1v1h-1v1h-1v1h-1v1h-2v-3h-2v-4h2z"/><path class="b" d="M529 150h1v1h1v1h1v1h1v1h-1v1h-1v1h-1v1h-1v-3h-2v-2h2z"/><path class="w" d="M530 153h2v1h1v1h1v1h1v1h1v1h-1v1h-1v1h-1v1h-1v1h-2v-3h-2v-4h2z"/><path class="b" d="M531 154h1v1h1v1h1v1h1v1h-1v1h-1v1h-1v1h-1v-3h-2v-2h2z"/><path class="w" d="M534 161h2v1h1v1h1v1h1v1h1v1h-1v1h-1v1h-1v1h-1v1h-2v-3h-2v-4h2z"/><path class="b" d="M535 162h1v1h1v1h1v1h1v1h-1v1h-1v1h-1v1h-1v-3h-2v-2h2z"/><path class="w" d="M536 174h2v1h1v1h1v1h1v1h1v1h-1v1h-1v1h-1v1h-1v1h-2v-3h-2v-4h2z"/><path class="b" d="M537 175h1v1h1v1h1v1h1v1h-1v1h-1v1h-1v1h-1v-3h-2v-2h2z"/><path class="w" d="M544 184h2v1h1v1h1v1h1v1h1v1h-1v1h-1v1h-1v1h-1v1h-2v-3h-2v-4h2z"/><path class="b" d="M545 185h1v1h1v1h1v1h1v1h-1v1h-1v1h-1v1h-1v-3h-2v-2h2z"/><path class="w" d="M556 144h2v1h1v1h1v1h1v1h1v1h-1v1h-1v1h-1v1h-1v1h-2v-3h-2v-4h2z"/><path class="b" d="M557 145h1v1h1v1h1v1h1v1h-1v1h-1v1h-1v1h-1v-3h-2v-2h2z"/><path class="w" d="M558 149h2v1h1v1h1v1h1v1h1v1h-1v1h-1v1h-1v1h-1v1h-2v-3h-2v-4h2z"/><path class="b" d="M559 150h1v1h1v1h1v1h1v1h-1v1h-1v1h-1v1h-1v-3h-2v-2h2z"/><path class="w" d="M561 161h2v9h-2v-1h-1v-1h-1v-1h-1v-1h-1v-1h1v-1h1v-1h1v-1h1z"/><path class="y" d="M561 162h1v7h-1v-1h-1v-1h-1v-1h-1v-1h1v-1h1v-1h1z"/><path class="w" d="M560 154h2v1h1v1h1v1h1v1h1v1h-1v1h-1v1h-1v1h-1v1h-2v-3h-2v-4h2z"/><path class="b" d="M561 155h1v1h1v1h1v1h1v1h-1v1h-1v1h-1v1h-1v-3h-2v-2h2z"/><path class="w" d="M563 116h2v1h1v1h1v1h1v1h1v1h-1v1h-1v1h-1v1h-1v1h-2v-3h-2v-4h2z"/><path class="b" d="M564 117h1v1h1v1h1v1h1v1h-1v1h-1v1h-1v1h-1v-3h-2v-2h2z"/><path class="w" d="M569 138h2v9h-2v-1h-1v-1h-1v-1h-1v-1h-1v-1h1v-1h1v-1h1v-1h1z"/><path class="y" d="M569 139h1v7h-1v-1h-1v-1h-1v-1h-1v-1h1v-1h1v-1h1z"/><path class="w" d="M568 113h2v1h1v1h1v1h1v1h1v1h-1v1h-1v1h-1v1h-1v1h-2v-3h-2v-4h2z"/><path class="b" d="M569 114h1v1h1v1h1v1h1v1h-1v1h-1v1h-1v1h-1v-3h-2v-2h2z"/><path class="w" d="M572 110h2v1h1v1h1v1h1v1h1v1h-1v1h-1v1h-1v1h-1v1h-2v-3h-2v-4h2z"/><path class="b" d="M573 111h1v1h1v1h1v1h1v1h-1v1h-1v1h-1v1h-1v-3h-2v-2h2z"/><path class="w" d="M573 117h2v1h1v1h1v1h1v1h1v1h-1v1h-1v1h-1v1h-1v1h-2v-3h-2v-4h2z"/><path class="b" d="M574 118h1v1h1v1h1v1h1v1h-1v1h-1v1h-1v1h-1v-3h-2v-2h2z"/><path class="w" d="M577 106h2v9h-2v-1h-1v-1h-1v-1h-1v-1h-1v-1h1v-1h1v-1h1v-1h1z"/><path class="y" d="M577 107h1v7h-1v-1h-1v-1h-1v-1h-1v-1h1v-1h1v-1h1z"/><path class="w" d="M578 121h2v1h1v1h1v1h1v1h1v1h-1v1h-1v1h-1v1h-1v1h-2v-3h-2v-4h2z"/><path class="b" d="M579 122h1v1h1v1h1v1h1v1h-1v1h-1v1h-1v1h-1v-3h-2v-2h2z"/><path class="w" d="M584 113h2v9h-2v-1h-1v-1h-1v-1h-1v-1h-1v-1h1v-1h1v-1h1v-1h1z"/><path class="y" d="M584 114h1v7h-1v-1h-1v-1h-1v-1h-1v-1h1v-1h1v-1h1z"/><path class="w" d="M582 125h2v1h1v1h1v1h1v1h1v1h-1v1h-1v1h-1v1h-1v1h-2v-3h-2v-4h2z"/><path class="b" d="M583 126h1v1h1v1h1v1h1v1h-1v1h-1v1h-1v1h-1v-3h-2v-2h2z"/><path class="w" d="M586 134h2v1h1v1h1v1h1v1h1v1h-1v1h-1v1h-1v1h-1v1h-2v-3h-2v-4h2z"/><path class="b" d="M587 135h1v1h1v1h1v1h1v1h-1v1h-1v1h-1v1h-1v-3h-2v-2h2z"/><path class="w" d="M591 120h2v9h-2v-1h-1v-1h-1v-1h-1v-1h-1v-1h1v-1h1v-1h1v-1h1z"/><path class="y" d="M591 121h1v7h-1v-1h-1v-1h-1v-1h-1v-1h1v-1h1v-1h1z"/><path class="w" d="M588 139h2v1h1v1h1v1h1v1h1v1h-1v1h-1v1h-1v1h-1v1h-2v-3h-2v-4h2z"/><path class="b" d="M589 140h1v1h1v1h1v1h1v1h-1v1h-1v1h-1v1h-1v-3h-2v-2h2z"/><path class="w" d="M591 143h2v1h1v1h1v1h1v1h1v1h-1v1h-1v1h-1v1h-1v1h-2v-3h-2v-4h2z"/><path class="b" d="M592 144h1v1h1v1h1v1h1v1h-1v1h-1v1h-1v1h-1v-3h-2v-2h2z"/><path class="w" d="M595 146h2v1h1v1h1v1h1v1h1v1h-1v1h-1v1h-1v1h-1v1h-2v-3h-2v-4h2z"/><path class="b" d="M596 147h1v1h1v1h1v1h1v1h-1v1h-1v1h-1v1h-1v-3h-2v-2h2z"/><path class="w" d="M600 149h2v1h1v1h1v1h1v1h1v1h-1v1h-1v1h-1v1h-1v1h-2v-3h-2v-4h2z"/><path class="b" d="M601 150h1v1h1v1h1v1h1v1h-1v1h-1v1h-1v1h-1v-3h-2v-2h2z"/><path class="w" d="M606 156h2v1h1v1h1v1h1v1h1v1h-1v1h-1v1h-1v1h-1v1h-2v-3h-2v-4h2z"/><path class="b" d="M607 157h1v1h1v1h1v1h1v1h-1v1h-1v1h-1v1h-1v-3h-2v-2h2z"/><path class="w" d="M610 140h2v1h1v1h1v1h1v1h1v1h-1v1h-1v1h-1v1h-1v1h-2v-3h-2v-4h2z"/><path class="b" d="M611 141h1v1h1v1h1v1h1v1h-1v1h-1v1h-1v1h-1v-3h-2v-2h2z"/><path class="w" d="M614 148h2v1h1v1h1v1h1v1h1v1h-1v1h-1v1h-1v1h-1v1h-2v-3h-2v-4h2z"/><path class="b" d="M615 149h1v1h1v1h1v1h1v1h-1v1h-1v1h-1v1h-1v-3h-2v-2h2z"/><path class="w" d="M619 136h2v9h-2v-1h-1v-1h-1v-1h-1v-1h-1v-1h1v-1h1v-1h1v-1h1z"/><path class="y" d="M619 137h1v7h-1v-1h-1v-1h-1v-1h-1v-1h1v-1h1v-1h1z"/><path class="w" d="M618 168h2v1h1v1h1v1h1v1h1v1h-1v1h-1v1h-1v1h-1v1h-2v-3h-2v-4h2z"/><path class="b" d="M619 169h1v1h1v1h1v1h1v1h-1v1h-1v1h-1v1h-1v-3h-2v-2h2z"/><path class="w" d="M623 144h2v9h-2v-1h-1v-1h-1v-1h-1v-1h-1v-1h1v-1h1v-1h1v-1h1z"/><path class="y" d="M623 145h1v7h-1v-1h-1v-1h-1v-1h-1v-1h1v-1h1v-1h1z"/><path class="w" d="M623 152h2v1h1v1h1v1h1v1h1v1h-1v1h-1v1h-1v1h-1v1h-2v-3h-2v-4h2z"/><path class="b" d="M624 153h1v1h1v1h1v1h1v1h-1v1h-1v1h-1v1h-1v-3h-2v-2h2z"/><path class="w" d="M624 152h2v1h1v1h1v1h1v1h1v1h-1v1h-1v1h-1v1h-1v1h-2v-3h-2v-4h2z"/><path class="b" d="M625 153h1v1h1v1h1v1h1v1h-1v1h-1v1h-1v1h-1v-3h-2v-2h2z"/><path class="w" d="M629 167h2v9h-2v-1h-1v-1h-1v-1h-1v-1h-1v-1h1v-1h1v-1h1v-1h1z"/><path class="y" d="M629 168h1v7h-1v-1h-1v-1h-1v-1h-1v-1h1v-1h1v-1h1z"/><path class="w" d="M627 135h2v1h1v1h1v1h1v1h1v1h-1v1h-1v1h-1v1h-1v1h-2v-3h-2v-4h2z"/><path class="b" d="M628 136h1v1h1v1h1v1h1v1h-1v1h-1v1h-1v1h-1v-3h-2v-2h2z"/><path class="w" d="M630 134h2v1h1v1h1v1h1v1h1v1h-1v1h-1v1h-1v1h-1v1h-2v-3h-2v-4h2z"/><path class="b" d="M631 135h1v1h1v1h1v1h1v1h-1v1h-1v1h-1v1h-1v-3h-2v-2h2z"/><path class="w" d="M635 136h2v9h-2v-1h-1v-1h-1v-1h-1v-1h-1v-1h1v-1h1v-1h1v-1h1z"/><path class="y" d="M635 137h1v7h-1v-1h-1v-1h-1v-1h-1v-1h1v-1h1v-1h1z"/><path class="w" d="M634 126h2v1h1v1h1v1h1v1h1v1h-1v1h-1v1h-1v1h-1v1h-2v-3h-2v-4h2z"/><path class="b" d="M635 127h1v1h1v1h1v1h1v1h-1v1h-1v1h-1v1h-1v-3h-2v-2h2z"/><path class="w" d="M638 115h2v1h1v1h1v1h1v1h1v1h-1v1h-1v1h-1v1h-1v1h-2v-3h-2v-4h2z"/><path class="b" d="M639 116h1v1h1v1h1v1h1v1h-1v1h-1v1h-1v1h-1v-3h-2v-2h2z"/><path class="w" d="M642 122h2v9h-2v-1h-1v-1h-1v-1h-1v-1h-1v-1h1v-1h1v-1h1v-1h1z"/><path class="y" d="M642 123h1v7h-1v-1h-1v-1h-1v-1h-1v-1h1v-1h1v-1h1z"/><path class="w" d="M644 109h2v1h1v1h1v1h1v1h1v1h-1v1h-1v1h-1v1h-1v1h-2v-3h-2v-4h2z"/><path class="b" d="M645 110h1v1h1v1h1v1h1v1h-1v1h-1v1h-1v1h-1v-3h-2v-2h2z"/><path class="w" d="M646 116h2v1h1v1h1v1h1v1h1v1h-1v1h-1v1h-1v1h-1v1h-2v-3h-2v-4h2z"/><path class="b" d="M647 117h1v1h1v1h1v1h1v1h-1v1h-1v1h-1v1h-1v-3h-2v-2h2z"/><path class="w" d="M651 112h2v9h-2v-1h-1v-1h-1v-1h-1v-1h-1v-1h1v-1h1v-1h1v-1h1z"/><path class="y" d="M651 113h1v7h-1v-1h-1v-1h-1v-1h-1v-1h1v-1h1v-1h1z"/><path class="w" d="M652 96h2v1h1v1h1v1h1v1h1v1h-1v1h-1v1h-1v1h-1v1h-2v-3h-2v-4h2z"/><path class="b" d="M653 97h1v1h1v1h1v1h1v1h-1v1h-1v1h-1v1h-1v-3h-2v-2h2z"/><path class="w" d="M657 100h2v9h-2v-1h-1v-1h-1v-1h-1v-1h-1v-1h1v-1h1v-1h1v-1h1z"/><path class="y" d="M657 101h1v7h-1v-1h-1v-1h-1v-1h-1v-1h1v-1h1v-1h1z"/><path class="w" d="M661 86h2v9h-2v-1h-1v-1h-1v-1h-1v-1h-1v-1h1v-1h1v-1h1v-1h1z"/><path class="y" d="M661 87h1v7h-1v-1h-1v-1h-1v-1h-1v-1h1v-1h1v-1h1z"/><path class="w" d="M670 71h2v1h1v1h1v1h1v1h1v1h-1v1h-1v1h-1v1h-1v1h-2v-3h-2v-4h2z"/><path class="b" d="M671 72h1v1h1v1h1v1h1v1h-1v1h-1v1h-1v1h-1v-3h-2v-2h2z"/><path class="w" d="M672 74h2v1h1v1h1v1h1v1h1v1h-1v1h-1v1h-1v1h-1v1h-2v-3h-2v-4h2z"/><path class="b" d="M673 75h1v1h1v1h1v1h1v1h-1v1h-1v1h-1v1h-1v-3h-2v-2h2z"/><path class="w" d="M676 76h2v1h1v1h1v1h1v1h1v1h-1v1h-1v1h-1v1h-1v1h-2v-3h-2v-4h2z"/><path class="b" d="M677 77h1v1h1v1h1v1h1v1h-1v1h-1v1h-1v1h-1v-3h-2v-2h2z"/><path class="w" d="M684 61h2v1h1v1h1v1h1v1h1v1h-1v1h-1v1h-1v1h-1v1h-2v-3h-2v-4h2z"/><path class="b" d="M685 62h1v1h1v1h1v1h1v1h-1v1h-1v1h-1v1h-1v-3h-2v-2h2z"/><path class="w" d="M688 58h2v9h-2v-1h-1v-1h-1v-1h-1v-1h-1v-1h1v-1h1v-1h1v-1h1z"/><path class="y" d="M688 59h1v7h-1v-1h-1v-1h-1v-1h-1v-1h1v-1h1v-1h1z"/><path class="w" d="M686 79h2v1h1v1h1v1h1v1h1v1h-1v1h-1v1h-1v1h-1v1h-2v-3h-2v-4h2z"/><path class="b" d="M687 80h1v1h1v1h1v1h1v1h-1v1h-1v1h-1v1h-1v-3h-2v-2h2z"/><path class="w" d="M688 84h2v1h1v1h1v1h1v1h1v1h-1v1h-1v1h-1v1h-1v1h-2v-3h-2v-4h2z"/><path class="b" d="M689 85h1v1h1v1h1v1h1v1h-1v1h-1v1h-1v1h-1v-3h-2v-2h2z"/><path class="w" d="M692 88h2v1h1v1h1v1h1v1h1v1h-1v1h-1v1h-1v1h-1v1h-2v-3h-2v-4h2z"/><path class="b" d="M693 89h1v1h1v1h1v1h1v1h-1v1h-1v1h-1v1h-1v-3h-2v-2h2z"/><path class="w" d="M694 94h2v1h1v1h1v1h1v1h1v1h-1v1h-1v1h-1v1h-1v1h-2v-3h-2v-4h2z"/><path class="b" d="M695 95h1v1h1v1h1v1h1v1h-1v1h-1v1h-1v1h-1v-3h-2v-2h2z"/><path class="w" d="M696 105h2v1h1v1h1v1h1v1h1v1h-1v1h-1v1h-1v1h-1v1h-2v-3h-2v-4h2z"/><path class="b" d="M697 106h1v1h1v1h1v1h1v1h-1v1h-1v1h-1v1h-1v-3h-2v-2h2z"/><path class="w" d="M698 114h2v1h1v1h1v1h1v1h1v1h-1v1h-1v1h-1v1h-1v1h-2v-3h-2v-4h2z"/><path class="b" d="M699 115h1v1h1v1h1v1h1v1h-1v1h-1v1h-1v1h-1v-3h-2v-2h2z"/><path class="w" d="M704 118h2v1h1v1h1v1h1v1h1v1h-1v1h-1v1h-1v1h-1v1h-2v-3h-2v-4h2z"/><path class="b" d="M705 119h1v1h1v1h1v1h1v1h-1v1h-1v1h-1v1h-1v-3h-2v-2h2z"/><path class="w" d="M706 128h2v1h1v1h1v1h1v1h1v1h-1v1h-1v1h-1v1h-1v1h-2v-3h-2v-4h2z"/><path class="b" d="M707 129h1v1h1v1h1v1h1v1h-1v1h-1v1h-1v1h-1v-3h-2v-2h2z"/><path class="w" d="M712 84h2v1h1v1h1v1h1v1h1v1h-1v1h-1v1h-1v1h-1v1h-2v-3h-2v-4h2z"/><path class="b" d="M713 85h1v1h1v1h1v1h1v1h-1v1h-1v1h-1v1h-1v-3h-2v-2h2z"/><path class="w" d="M717 95h2v9h-2v-1h-1v-1h-1v-1h-1v-1h-1v-1h1v-1h1v-1h1v-1h1z"/><path class="y" d="M717 96h1v7h-1v-1h-1v-1h-1v-1h-1v-1h1v-1h1v-1h1z"/><path class="w" d="M718 83h2v1h1v1h1v1h1v1h1v1h-1v1h-1v1h-1v1h-1v1h-2v-3h-2v-4h2z"/><path class="b" d="M719 84h1v1h1v1h1v1h1v1h-1v1h-1v1h-1v1h-1v-3h-2v-2h2z"/><path class="w" d="M723 77h2v9h-2v-1h-1v-1h-1v-1h-1v-1h-1v-1h1v-1h1v-1h1v-1h1z"/><path class="y" d="M723 78h1v7h-1v-1h-1v-1h-1v-1h-1v-1h1v-1h1v-1h1z"/><path class="w" d="M722 68h2v1h1v1h1v1h1v1h1v1h-1v1h-1v1h-1v1h-1v1h-2v-3h-2v-4h2z"/><path class="b" d="M723 69h1v1h1v1h1v1h1v1h-1v1h-1v1h-1v1h-1v-3h-2v-2h2z"/><path class="w" d="M727 78h2v9h-2v-1h-1v-1h-1v-1h-1v-1h-1v-1h1v-1h1v-1h1v-1h1z"/><path class="y" d="M727 79h1v7h-1v-1h-1v-1h-1v-1h-1v-1h1v-1h1v-1h1z"/><path class="w" d="M731 56h2v9h-2v-1h-1v-1h-1v-1h-1v-1h-1v-1h1v-1h1v-1h1v-1h1z"/><path class="y" d="M731 57h1v7h-1v-1h-1v-1h-1v-1h-1v-1h1v-1h1v-1h1z"/><path class="w" d="M733 36h2v1h1v1h1v1h1v1h1v1h-1v1h-1v1h-1v1h-1v1h-2v-3h-2v-4h2z"/><path class="b" d="M734 37h1v1h1v1h1v1h1v1h-1v1h-1v1h-1v1h-1v-3h-2v-2h2z"/><path class="w" d="M738 36h2v1h1v1h1v1h1v1h1v1h-1v1h-1v1h-1v1h-1v1h-2v-3h-2v-4h2z"/><path class="b" d="M739 37h1v1h1v1h1v1h1v1h-1v1h-1v1h-1v1h-1v-3h-2v-2h2z"/><path class="w" d="M742 32h2v9h-2v-1h-1v-1h-1v-1h-1v-1h-1v-1h1v-1h1v-1h1v-1h1z"/><path class="y" d="M742 33h1v7h-1v-1h-1v-1h-1v-1h-1v-1h1v-1h1v-1h1z"/><path class="w" d="M742 21h2v1h1v1h1v1h1v1h1v1h-1v1h-1v1h-1v1h-1v1h-2v-3h-2v-4h2z"/><path class="b" d="M743 22h1v1h1v1h1v1h1v1h-1v1h-1v1h-1v1h-1v-3h-2v-2h2z"/><path class="w" d="M748 34h2v9h-2v-1h-1v-1h-1v-1h-1v-1h-1v-1h1v-1h1v-1h1v-1h1z"/><path class="y" d="M748 35h1v7h-1v-1h-1v-1h-1v-1h-1v-1h1v-1h1v-1h1z"/><path class="w" d="M746 32h2v1h1v1h1v1h1v1h1v1h-1v1h-1v1h-1v1h-1v1h-2v-3h-2v-4h2z"/><path class="b" d="M747 33h1v1h1v1h1v1h1v1h-1v1h-1v1h-1v1h-1v-3h-2v-2h2z"/><path class="w" d="M750 22h2v1h1v1h1v1h1v1h1v1h-1v1h-1v1h-1v1h-1v1h-2v-3h-2v-4h2z"/><path class="b" d="M751 23h1v1h1v1h1v1h1v1h-1v1h-1v1h-1v1h-1v-3h-2v-2h2z"/><path class="w" d="M754 22h2v1h1v1h1v1h1v1h1v1h-1v1h-1v1h-1v1h-1v1h-2v-3h-2v-4h2z"/><path class="b" d="M755 23h1v1h1v1h1v1h1v1h-1v1h-1v1h-1v1h-1v-3h-2v-2h2z"/><path class="w" d="M759 16h2v9h-2v-1h-1v-1h-1v-1h-1v-1h-1v-1h1v-1h1v-1h1v-1h1z"/><path class="y" d="M759 17h1v7h-1v-1h-1v-1h-1v-1h-1v-1h1v-1h1v-1h1z"/><path class="w" d="M756 28h2v1h1v1h1v1h1v1h1v1h-1v1h-1v1h-1v1h-1v1h-2v-3h-2v-4h2z"/><path class="b" d="M757 29h1v1h1v1h1v1h1v1h-1v1h-1v1h-1v1h-1v-3h-2v-2h2z"/><path class="w" d="M759 20h2v1h1v1h1v1h1v1h1v1h-1v1h-1v1h-1v1h-1v1h-2v-3h-2v-4h2z"/><path class="b" d="M760 21h1v1h1v1h1v1h1v1h-1v1h-1v1h-1v1h-1v-3h-2v-2h2z"/><path class="w" d="M762 26h2v1h1v1h1v1h1v1h1v1h-1v1h-1v1h-1v1h-1v1h-2v-3h-2v-4h2z"/><path class="b" d="M763 27h1v1h1v1h1v1h1v1h-1v1h-1v1h-1v1h-1v-3h-2v-2h2z"/><path class="w" d="M768 17h2v1h1v1h1v1h1v1h1v1h-1v1h-1v1h-1v1h-1v1h-2v-3h-2v-4h2z"/><path class="b" d="M769 18h1v1h1v1h1v1h1v1h-1v1h-1v1h-1v1h-1v-3h-2v-2h2z"/><path class="w" d="M774 10h2v9h-2v-1h-1v-1h-1v-1h-1v-1h-1v-1h1v-1h1v-1h1v-1h1z"/><path class="y" d="M774 11h1v7h-1v-1h-1v-1h-1v-1h-1v-1h1v-1h1v-1h1z"/><path class="w" d="M772 20h2v1h1v1h1v1h1v1h1v1h-1v1h-1v1h-1v1h-1v1h-2v-3h-2v-4h2z"/><path class="b" d="M773 21h1v1h1v1h1v1h1v1h-1v1h-1v1h-1v1h-1v-3h-2v-2h2z"/><path class="w" d="M774 28h2v1h1v1h1v1h1v1h1v1h-1v1h-1v1h-1v1h-1v1h-2v-3h-2v-4h2z"/><path class="b" d="M775 29h1v1h1v1h1v1h1v1h-1v1h-1v1h-1v1h-1v-3h-2v-2h2z"/><path class="w" d="M778 10h2v9h-2v-1h-1v-1h-1v-1h-1v-1h-1v-1h1v-1h1v-1h1v-1h1z"/><path class="y" d="M778 11h1v7h-1v-1h-1v-1h-1v-1h-1v-1h1v-1h1v-1h1z"/><path class="w" d="M776 34h2v1h1v1h1v1h1v1h1v1h-1v1h-1v1h-1v1h-1v1h-2v-3h-2v-4h2z"/><path class="b" d="M777 35h1v1h1v1h1v1h1v1h-1v1h-1v1h-1v1h-1v-3h-2v-2h2z"/><path class="w" d="M778 42h2v1h1v1h1v1h1v1h1v1h-1v1h-1v1h-1v1h-1v1h-2v-3h-2v-4h2z"/><path class="b" d="M779 43h1v1h1v1h1v1h1v1h-1v1h-1v1h-1v1h-1v-3h-2v-2h2z"/><path class="w" d="M782 34h2v1h1v1h1v1h1v1h1v1h-1v1h-1v1h-1v1h-1v1h-2v-3h-2v-4h2z"/><path class="b" d="M783 35h1v1h1v1h1v1h1v1h-1v1h-1v1h-1v1h-1v-3h-2v-2h2z"/><path class="w" d="M788 30h2v9h-2v-1h-1v-1h-1v-1h-1v-1h-1v-1h1v-1h1v-1h1v-1h1z"/><path class="y" d="M788 31h1v7h-1v-1h-1v-1h-1v-1h-1v-1h1v-1h1v-1h1z"/><path class="w" d="M786 48h2v1h1v1h1v1h1v1h1v1h-1v1h-1v1h-1v1h-1v1h-2v-3h-2v-4h2z"/><path class="b" d="M787 49h1v1h1v1h1v1h1v1h-1v1h-1v1h-1v1h-1v-3h-2v-2h2z"/><path class="w" d="M792 30h2v9h-2v-1h-1v-1h-1v-1h-1v-1h-1v-1h1v-1h1v-1h1v-1h1z"/><path class="y" d="M792 31h1v7h-1v-1h-1v-1h-1v-1h-1v-1h1v-1h1v-1h1z"/><path class="w" d="M788 53h2v1h1v1h1v1h1v1h1v1h-1v1h-1v1h-1v1h-1v1h-2v-3h-2v-4h2z"/><path class="b" d="M789 54h1v1h1v1h1v1h1v1h-1v1h-1v1h-1v1h-1v-3h-2v-2h2z"/><path class="w" d="M792 28h2v1h1v1h1v1h1v1h1v1h-1v1h-1v1h-1v1h-1v1h-2v-3h-2v-4h2z"/><path class="b" d="M793 29h1v1h1v1h1v1h1v1h-1v1h-1v1h-1v1h-1v-3h-2v-2h2z"/><path class="w" d="M796 44h2v1h1v1h1v1h1v1h1v1h-1v1h-1v1h-1v1h-1v1h-2v-3h-2v-4h2z"/><path class="b" d="M797 45h1v1h1v1h1v1h1v1h-1v1h-1v1h-1v1h-1v-3h-2v-2h2z"/><path class="w" d="M800 51h2v1h1v1h1v1h1v1h1v1h-1v1h-1v1h-1v1h-1v1h-2v-3h-2v-4h2z"/><path class="b" d="M801 52h1v1h1v1h1v1h1v1h-1v1h-1v1h-1v1h-1v-3h-2v-2h2z"/><path class="w" d="M812 58h2v1h1v1h1v1h1v1h1v1h-1v1h-1v1h-1v1h-1v1h-2v-3h-2v-4h2z"/><path class="b" d="M813 59h1v1h1v1h1v1h1v1h-1v1h-1v1h-1v1h-1v-3h-2v-2h2z"/><path class="w" d="M814 60h2v1h1v1h1v1h1v1h1v1h-1v1h-1v1h-1v1h-1v1h-2v-3h-2v-4h2z"/><path class="b" d="M815 61h1v1h1v1h1v1h1v1h-1v1h-1v1h-1v1h-1v-3h-2v-2h2z"/><path class="w" d="M815 60h2v1h1v1h1v1h1v1h1v1h-1v1h-1v1h-1v1h-1v1h-2v-3h-2v-4h2z"/><path class="b" d="M816 61h1v1h1v1h1v1h1v1h-1v1h-1v1h-1v1h-1v-3h-2v-2h2z"/><path class="w" d="M817 50h2v1h1v1h1v1h1v1h1v1h-1v1h-1v1h-1v1h-1v1h-2v-3h-2v-4h2z"/><path class="b" d="M818 51h1v1h1v1h1v1h1v1h-1v1h-1v1h-1v1h-1v-3h-2v-2h2z"/><path class="w" d="M820 50h2v1h1v1h1v1h1v1h1v1h-1v1h-1v1h-1v1h-1v1h-2v-3h-2v-4h2z"/><path class="b" d="M821 51h1v1h1v1h1v1h1v1h-1v1h-1v1h-1v1h-1v-3h-2v-2h2z"/><path class="w" d="M826 52h2v9h-2v-1h-1v-1h-1v-1h-1v-1h-1v-1h1v-1h1v-1h1v-1h1z"/><path class="y" d="M826 53h1v7h-1v-1h-1v-1h-1v-1h-1v-1h1v-1h1v-1h1z"/><path class="w" d="M824 40h2v1h1v1h1v1h1v1h1v1h-1v1h-1v1h-1v1h-1v1h-2v-3h-2v-4h2z"/><path class="b" d="M825 41h1v1h1v1h1v1h1v1h-1v1h-1v1h-1v1h-1v-3h-2v-2h2z"/><path class="w" d="M825 52h2v1h1v1h1v1h1v1h1v1h-1v1h-1v1h-1v1h-1v1h-2v-3h-2v-4h2z"/><path class="b" d="M826 53h1v1h1v1h1v1h1v1h-1v1h-1v1h-1v1h-1v-3h-2v-2h2z"/><path class="w" d="M831 43h2v9h-2v-1h-1v-1h-1v-1h-1v-1h-1v-1h1v-1h1v-1h1v-1h1z"/><path class="y" d="M831 44h1v7h-1v-1h-1v-1h-1v-1h-1v-1h1v-1h1v-1h1z"/><path class="w" d="M830 49h2v1h1v1h1v1h1v1h1v1h-1v1h-1v1h-1v1h-1v1h-2v-3h-2v-4h2z"/><path class="b" d="M831 50h1v1h1v1h1v1h1v1h-1v1h-1v1h-1v1h-1v-3h-2v-2h2z"/><path class="w" d="M832 59h2v1h1v1h1v1h1v1h1v1h-1v1h-1v1h-1v1h-1v1h-2v-3h-2v-4h2z"/><path class="b" d="M833 60h1v1h1v1h1v1h1v1h-1v1h-1v1h-1v1h-1v-3h-2v-2h2z"/><path class="w" d="M836 44h2v9h-2v-1h-1v-1h-1v-1h-1v-1h-1v-1h1v-1h1v-1h1v-1h1z"/><path class="y" d="M836 45h1v7h-1v-1h-1v-1h-1v-1h-1v-1h1v-1h1v-1h1z"/><path class="w" d="M838 46h2v1h1v1h1v1h1v1h1v1h-1v1h-1v1h-1v1h-1v1h-2v-3h-2v-4h2z"/><path class="b" d="M839 47h1v1h1v1h1v1h1v1h-1v1h-1v1h-1v1h-1v-3h-2v-2h2z"/><path class="w" d="M844 49h2v9h-2v-1h-1v-1h-1v-1h-1v-1h-1v-1h1v-1h1v-1h1v-1h1z"/><path class="y" d="M844 50h1v7h-1v-1h-1v-1h-1v-1h-1v-1h1v-1h1v-1h1z"/><path class="w" d="M842 62h2v1h1v1h1v1h1v1h1v1h-1v1h-1v1h-1v1h-1v1h-2v-3h-2v-4h2z"/><path class="b" d="M843 63h1v1h1v1h1v1h1v1h-1v1h-1v1h-1v1h-1v-3h-2v-2h2z"/><path class="w" d="M844 68h2v1h1v1h1v1h1v1h1v1h-1v1h-1v1h-1v1h-1v1h-2v-3h-2v-4h2z"/><path class="b" d="M845 69h1v1h1v1h1v1h1v1h-1v1h-1v1h-1v1h-1v-3h-2v-2h2z"/><path class="w" d="M847 44h2v9h-2v-1h-1v-1h-1v-1h-1v-1h-1v-1h1v-1h1v-1h1v-1h1z"/><path class="y" d="M847 45h1v7h-1v-1h-1v-1h-1v-1h-1v-1h1v-1h1v-1h1z"/><path class="w" d="M846 74h2v1h1v1h1v1h1v1h1v1h-1v1h-1v1h-1v1h-1v1h-2v-3h-2v-4h2z"/><path class="b" d="M847 75h1v1h1v1h1v1h1v1h-1v1h-1v1h-1v1h-1v-3h-2v-2h2z"/><path class="w" d="M848 83h2v1h1v1h1v1h1v1h1v1h-1v1h-1v1h-1v1h-1v1h-2v-3h-2v-4h2z"/><path class="b" d="M849 84h1v1h1v1h1v1h1v1h-1v1h-1v1h-1v1h-1v-3h-2v-2h2z"/><path class="w" d="M850 102h2v1h1v1h1v1h1v1h1v1h-1v1h-1v1h-1v1h-1v1h-2v-3h-2v-4h2z"/><path class="b" d="M851 103h1v1h1v1h1v1h1v1h-1v1h-1v1h-1v1h-1v-3h-2v-2h2z"/><path class="w" d="M852 112h2v1h1v1h1v1h1v1h1v1h-1v1h-1v1h-1v1h-1v1h-2v-3h-2v-4h2z"/><path class="b" d="M853 113h1v1h1v1h1v1h1v1h-1v1h-1v1h-1v1h-1v-3h-2v-2h2z"/><path class="w" d="M872 95h2v1h1v1h1v1h1v1h1v1h-1v1h-1v1h-1v1h-1v1h-2v-3h-2v-4h2z"/><path class="b" d="M873 96h1v1h1v1h1v1h1v1h-1v1h-1v1h-1v1h-1v-3h-2v-2h2z"/><path class="w" d="M874 104h2v1h1v1h1v1h1v1h1v1h-1v1h-1v1h-1v1h-1v1h-2v-3h-2v-4h2z"/><path class="b" d="M875 105h1v1h1v1h1v1h1v1h-1v1h-1v1h-1v1h-1v-3h-2v-2h2z"/><path class="w" d="M878 86h2v9h-2v-1h-1v-1h-1v-1h-1v-1h-1v-1h1v-1h1v-1h1v-1h1z"/><path class="y" d="M878 87h1v7h-1v-1h-1v-1h-1v-1h-1v-1h1v-1h1v-1h1z"/><path class="w" d="M876 112h2v1h1v1h1v1h1v1h1v1h-1v1h-1v1h-1v1h-1v1h-2v-3h-2v-4h2z"/><path class="r" d="M877 113h1v1h1v1h1v1h1v1h-1v1h-1v1h-1v1h-1v-3h-2v-2h2z"/><path class="w" d="M880 103h2v1h1v1h1v1h1v1h1v1h-1v1h-1v1h-1v1h-1v1h-2v-3h-2v-4h2z"/><path class="r" d="M881 104h1v1h1v1h1v1h1v1h-1v1h-1v1h-1v1h-1v-3h-2v-2h2z"/><path class="w" d="M884 119h2v1h1v1h1v1h1v1h1v1h-1v1h-1v1h-1v1h-1v1h-2v-3h-2v-4h2z"/><path class="r" d="M885 120h1v1h1v1h1v1h1v1h-1v1h-1v1h-1v1h-1v-3h-2v-2h2z"/><path class="w" d="M888 102h2v9h-2v-1h-1v-1h-1v-1h-1v-1h-1v-1h1v-1h1v-1h1v-1h1z"/><path class="y" d="M888 103h1v7h-1v-1h-1v-1h-1v-1h-1v-1h1v-1h1v-1h1z"/><path class="w" d="M886 107h2v1h1v1h1v1h1v1h1v1h-1v1h-1v1h-1v1h-1v1h-2v-3h-2v-4h2z"/><path class="r" d="M887 108h1v1h1v1h1v1h1v1h-1v1h-1v1h-1v1h-1v-3h-2v-2h2z"/><path class="w" d="M887 86h2v1h1v1h1v1h1v1h1v1h-1v1h-1v1h-1v1h-1v1h-2v-3h-2v-4h2z"/><path class="r" d="M888 87h1v1h1v1h1v1h1v1h-1v1h-1v1h-1v1h-1v-3h-2v-2h2z"/><path class="w" d="M890 112h2v9h-2v-1h-1v-1h-1v-1h-1v-1h-1v-1h1v-1h1v-1h1v-1h1z"/><path class="y" d="M890 113h1v7h-1v-1h-1v-1h-1v-1h-1v-1h1v-1h1v-1h1z"/><path class="w" d="M890 88h2v1h1v1h1v1h1v1h1v1h-1v1h-1v1h-1v1h-1v1h-2v-3h-2v-4h2z"/><path class="b" d="M891 89h1v1h1v1h1v1h1v1h-1v1h-1v1h-1v1h-1v-3h-2v-2h2z"/><path class="w" d="M892 94h2v1h1v1h1v1h1v1h1v1h-1v1h-1v1h-1v1h-1v1h-2v-3h-2v-4h2z"/><path class="b" d="M893 95h1v1h1v1h1v1h1v1h-1v1h-1v1h-1v1h-1v-3h-2v-2h2z"/><path class="w" d="M894 85h2v1h1v1h1v1h1v1h1v1h-1v1h-1v1h-1v1h-1v1h-2v-3h-2v-4h2z"/><path class="b" d="M895 86h1v1h1v1h1v1h1v1h-1v1h-1v1h-1v1h-1v-3h-2v-2h2z"/><path class="w" d="M898 94h2v1h1v1h1v1h1v1h1v1h-1v1h-1v1h-1v1h-1v1h-2v-3h-2v-4h2z"/><path class="b" d="M899 95h1v1h1v1h1v1h1v1h-1v1h-1v1h-1v1h-1v-3h-2v-2h2z"/><path class="w" d="M899 83h2v1h1v1h1v1h1v1h1v1h-1v1h-1v1h-1v1h-1v1h-2v-3h-2v-4h2z"/><path class="r" d="M900 84h1v1h1v1h1v1h1v1h-1v1h-1v1h-1v1h-1v-3h-2v-2h2z"/><path class="w" d="M902 86h2v1h1v1h1v1h1v1h1v1h-1v1h-1v1h-1v1h-1v1h-2v-3h-2v-4h2z"/><path class="b" d="M903 87h1v1h1v1h1v1h1v1h-1v1h-1v1h-1v1h-1v-3h-2v-2h2z"/><path class="w" d="M904 94h2v1h1v1h1v1h1v1h1v1h-1v1h-1v1h-1v1h-1v1h-2v-3h-2v-4h2z"/><path class="b" d="M905 95h1v1h1v1h1v1h1v1h-1v1h-1v1h-1v1h-1v-3h-2v-2h2z"/><path class="w" d="M908 84h2v9h-2v-1h-1v-1h-1v-1h-1v-1h-1v-1h1v-1h1v-1h1v-1h1z"/><path class="y" d="M908 85h1v7h-1v-1h-1v-1h-1v-1h-1v-1h1v-1h1v-1h1z"/><path class="w" d="M910 92h2v1h1v1h1v1h1v1h1v1h-1v1h-1v1h-1v1h-1v1h-2v-3h-2v-4h2z"/><path class="b" d="M911 93h1v1h1v1h1v1h1v1h-1v1h-1v1h-1v1h-1v-3h-2v-2h2z"/><path class="w" d="M916 86h2v9h-2v-1h-1v-1h-1v-1h-1v-1h-1v-1h1v-1h1v-1h1v-1h1z"/><path class="y" d="M916 87h1v7h-1v-1h-1v-1h-1v-1h-1v-1h1v-1h1v-1h1z"/><path class="w" d="M914 93h2v1h1v1h1v1h1v1h1v1h-1v1h-1v1h-1v1h-1v1h-2v-3h-2v-4h2z"/><path class="b" d="M915 94h1v1h1v1h1v1h1v1h-1v1h-1v1h-1v1h-1v-3h-2v-2h2z"/><path class="w" d="M920 90h2v9h-2v-1h-1v-1h-1v-1h-1v-1h-1v-1h1v-1h1v-1h1v-1h1z"/><path class="y" d="M920 91h1v7h-1v-1h-1v-1h-1v-1h-1v-1h1v-1h1v-1h1z"/><path class="w" d="M916 100h2v1h1v1h1v1h1v1h1v1h-1v1h-1v1h-1v1h-1v1h-2v-3h-2v-4h2z"/><path class="b" d="M917 101h1v1h1v1h1v1h1v1h-1v1h-1v1h-1v1h-1v-3h-2v-2h2z"/><path class="w" d="M918 128h2v1h1v1h1v1h1v1h1v1h-1v1h-1v1h-1v1h-1v1h-2v-3h-2v-4h2z"/><path class="r" d="M919 129h1v1h1v1h1v1h1v1h-1v1h-1v1h-1v1h-1v-3h-2v-2h2z"/><path class="w" d="M924 98h2v9h-2v-1h-1v-1h-1v-1h-1v-1h-1v-1h1v-1h1v-1h1v-1h1z"/><path class="y" d="M924 99h1v7h-1v-1h-1v-1h-1v-1h-1v-1h1v-1h1v-1h1z"/><path class="w" d="M921 125h2v1h1v1h1v1h1v1h1v1h-1v1h-1v1h-1v1h-1v1h-2v-3h-2v-4h2z"/><path class="r" d="M922 126h1v1h1v1h1v1h1v1h-1v1h-1v1h-1v1h-1v-3h-2v-2h2z"/><path class="w" d="M923 110h2v1h1v1h1v1h1v1h1v1h-1v1h-1v1h-1v1h-1v1h-2v-3h-2v-4h2z"/><path class="r" d="M924 111h1v1h1v1h1v1h1v1h-1v1h-1v1h-1v1h-1v-3h-2v-2h2z"/><path class="w" d="M925 106h2v1h1v1h1v1h1v1h1v1h-1v1h-1v1h-1v1h-1v1h-2v-3h-2v-4h2z"/><path class="r" d="M926 107h1v1h1v1h1v1h1v1h-1v1h-1v1h-1v1h-1v-3h-2v-2h2z"/><path class="w" d="M926 91h2v1h1v1h1v1h1v1h1v1h-1v1h-1v1h-1v1h-1v1h-2v-3h-2v-4h2z"/><path class="r" d="M927 92h1v1h1v1h1v1h1v1h-1v1h-1v1h-1v1h-1v-3h-2v-2h2z"/><path class="w" d="M932 110h2v9h-2v-1h-1v-1h-1v-1h-1v-1h-1v-1h1v-1h1v-1h1v-1h1z"/><path class="y" d="M932 111h1v7h-1v-1h-1v-1h-1v-1h-1v-1h1v-1h1v-1h1z"/><path class="w" d="M930 85h2v1h1v1h1v1h1v1h1v1h-1v1h-1v1h-1v1h-1v1h-2v-3h-2v-4h2z"/><path class="r" d="M931 86h1v1h1v1h1v1h1v1h-1v1h-1v1h-1v1h-1v-3h-2v-2h2z"/><path class="w" d="M933 92h2v1h1v1h1v1h1v1h1v1h-1v1h-1v1h-1v1h-1v1h-2v-3h-2v-4h2z"/><path class="b" d="M934 93h1v1h1v1h1v1h1v1h-1v1h-1v1h-1v1h-1v-3h-2v-2h2z"/><path class="w" d="M938 84h2v9h-2v-1h-1v-1h-1v-1h-1v-1h-1v-1h1v-1h1v-1h1v-1h1z"/><path class="y" d="M938 85h1v7h-1v-1h-1v-1h-1v-1h-1v-1h1v-1h1v-1h1z"/><path class="w" d="M935 96h2v1h1v1h1v1h1v1h1v1h-1v1h-1v1h-1v1h-1v1h-2v-3h-2v-4h2z"/><path class="b" d="M936 97h1v1h1v1h1v1h1v1h-1v1h-1v1h-1v1h-1v-3h-2v-2h2z"/><path class="w" d="M942 86h2v9h-2v-1h-1v-1h-1v-1h-1v-1h-1v-1h1v-1h1v-1h1v-1h1z"/><path class="y" d="M942 87h1v7h-1v-1h-1v-1h-1v-1h-1v-1h1v-1h1v-1h1z"/><path class="w" d="M940 96h2v1h1v1h1v1h1v1h1v1h-1v1h-1v1h-1v1h-1v1h-2v-3h-2v-4h2z"/><path class="b" d="M941 97h1v1h1v1h1v1h1v1h-1v1h-1v1h-1v1h-1v-3h-2v-2h2z"/><path class="w" d="M945 91h2v9h-2v-1h-1v-1h-1v-1h-1v-1h-1v-1h1v-1h1v-1h1v-1h1z"/><path class="y" d="M945 92h1v7h-1v-1h-1v-1h-1v-1h-1v-1h1v-1h1v-1h1z"/><path class="w" d="M944 86h2v1h1v1h1v1h1v1h1v1h-1v1h-1v1h-1v1h-1v1h-2v-3h-2v-4h2z"/><path class="b" d="M945 87h1v1h1v1h1v1h1v1h-1v1h-1v1h-1v1h-1v-3h-2v-2h2z"/><path class="w" d="M948 80h2v1h1v1h1v1h1v1h1v1h-1v1h-1v1h-1v1h-1v1h-2v-3h-2v-4h2z"/><path class="r" d="M949 81h1v1h1v1h1v1h1v1h-1v1h-1v1h-1v1h-1v-3h-2v-2h2z"/><path class="w" d="M950 92h2v1h1v1h1v1h1v1h1v1h-1v1h-1v1h-1v1h-1v1h-2v-3h-2v-4h2z"/><path class="b" d="M951 93h1v1h1v1h1v1h1v1h-1v1h-1v1h-1v1h-1v-3h-2v-2h2z"/><path class="w" d="M956 80h2v9h-2v-1h-1v-1h-1v-1h-1v-1h-1v-1h1v-1h1v-1h1v-1h1z"/><path class="y" d="M956 81h1v7h-1v-1h-1v-1h-1v-1h-1v-1h1v-1h1v-1h1z"/><path class="w" d="M957 86h2v1h1v1h1v1h1v1h1v1h-1v1h-1v1h-1v1h-1v1h-2v-3h-2v-4h2z"/><path class="b" d="M958 87h1v1h1v1h1v1h1v1h-1v1h-1v1h-1v1h-1v-3h-2v-2h2z"/><path class="w" d="M962 88h2v1h1v1h1v1h1v1h1v1h-1v1h-1v1h-1v1h-1v1h-2v-3h-2v-4h2z"/><path class="b" d="M963 89h1v1h1v1h1v1h1v1h-1v1h-1v1h-1v1h-1v-3h-2v-2h2z"/><path class="w" d="M968 92h2v1h1v1h1v1h1v1h1v1h-1v1h-1v1h-1v1h-1v1h-2v-3h-2v-4h2z"/><path class="b" d="M969 93h1v1h1v1h1v1h1v1h-1v1h-1v1h-1v1h-1v-3h-2v-2h2z"/><path class="w" d="M970 96h2v1h1v1h1v1h1v1h1v1h-1v1h-1v1h-1v1h-1v1h-2v-3h-2v-4h2z"/><path class="b" d="M971 97h1v1h1v1h1v1h1v1h-1v1h-1v1h-1v1h-1v-3h-2v-2h2z"/><path class="w" d="M977 88h2v9h-2v-1h-1v-1h-1v-1h-1v-1h-1v-1h1v-1h1v-1h1v-1h1z"/><path class="y" d="M977 89h1v7h-1v-1h-1v-1h-1v-1h-1v-1h1v-1h1v-1h1z"/><path class="w" d="M976 98h2v1h1v1h1v1h1v1h1v1h-1v1h-1v1h-1v1h-1v1h-2v-3h-2v-4h2z"/><path class="b" d="M977 99h1v1h1v1h1v1h1v1h-1v1h-1v1h-1v1h-1v-3h-2v-2h2z"/><path class="w" d="M980 94h2v9h-2v-1h-1v-1h-1v-1h-1v-1h-1v-1h1v-1h1v-1h1v-1h1z"/><path class="y" d="M980 95h1v7h-1v-1h-1v-1h-1v-1h-1v-1h1v-1h1v-1h1z"/><path class="w" d="M980 86h2v1h1v1h1v1h1v1h1v1h-1v1h-1v1h-1v1h-1v1h-2v-3h-2v-4h2z"/><path class="b" d="M981 87h1v1h1v1h1v1h1v1h-1v1h-1v1h-1v1h-1v-3h-2v-2h2z"/><path class="w" d="M986 92h2v9h-2v-1h-1v-1h-1v-1h-1v-1h-1v-1h1v-1h1v-1h1v-1h1z"/><path class="y" d="M986 93h1v7h-1v-1h-1v-1h-1v-1h-1v-1h1v-1h1v-1h1z"/><path class="w" d="M984 64h2v1h1v1h1v1h1v1h1v1h-1v1h-1v1h-1v1h-1v1h-2v-3h-2v-4h2z"/><path class="b" d="M985 65h1v1h1v1h1v1h1v1h-1v1h-1v1h-1v1h-1v-3h-2v-2h2z"/><path class="w" d="M989 76h2v9h-2v-1h-1v-1h-1v-1h-1v-1h-1v-1h1v-1h1v-1h1v-1h1z"/><path class="y" d="M989 77h1v7h-1v-1h-1v-1h-1v-1h-1v-1h1v-1h1v-1h1z"/><path class="w" d="M988 64h2v1h1v1h1v1h1v1h1v1h-1v1h-1v1h-1v1h-1v1h-2v-3h-2v-4h2z"/><path class="b" d="M989 65h1v1h1v1h1v1h1v1h-1v1h-1v1h-1v1h-1v-3h-2v-2h2z"/><path class="w" d="M991 49h2v1h1v1h1v1h1v1h1v1h-1v1h-1v1h-1v1h-1v1h-2v-3h-2v-4h2z"/><path class="b" d="M992 50h1v1h1v1h1v1h1v1h-1v1h-1v1h-1v1h-1v-3h-2v-2h2z"/><path class="w" d="M996 54h2v9h-2v-1h-1v-1h-1v-1h-1v-1h-1v-1h1v-1h1v-1h1v-1h1z"/><path class="y" d="M996 55h1v7h-1v-1h-1v-1h-1v-1h-1v-1h1v-1h1v-1h1z"/><path class="w" d="M994 60h2v1h1v1h1v1h1v1h1v1h-1v1h-1v1h-1v1h-1v1h-2v-3h-2v-4h2z"/><path class="b" d="M995 61h1v1h1v1h1v1h1v1h-1v1h-1v1h-1v1h-1v-3h-2v-2h2z"/><path class="w" d="M998 50h2v1h1v1h1v1h1v1h1v1h-1v1h-1v1h-1v1h-1v1h-2v-3h-2v-4h2z"/><path class="b" d="M999 51h1v1h1v1h1v1h1v1h-1v1h-1v1h-1v1h-1v-3h-2v-2h2z"/><path class="w" d="M1002 42h2v1h1v1h1v1h1v1h1v1h-1v1h-1v1h-1v1h-1v1h-2v-3h-2v-4h2z"/><path class="b" d="M1003 43h1v1h1v1h1v1h1v1h-1v1h-1v1h-1v1h-1v-3h-2v-2h2z"/><path class="w" d="M1004 48h2v1h1v1h1v1h1v1h1v1h-1v1h-1v1h-1v1h-1v1h-2v-3h-2v-4h2z"/><path class="b" d="M1005 49h1v1h1v1h1v1h1v1h-1v1h-1v1h-1v1h-1v-3h-2v-2h2z"/><path class="w" d="M1008 38h2v1h1v1h1v1h1v1h1v1h-1v1h-1v1h-1v1h-1v1h-2v-3h-2v-4h2z"/><path class="b" d="M1009 39h1v1h1v1h1v1h1v1h-1v1h-1v1h-1v1h-1v-3h-2v-2h2z"/><path class="w" d="M1012 34h2v1h1v1h1v1h1v1h1v1h-1v1h-1v1h-1v1h-1v1h-2v-3h-2v-4h2z"/><path class="b" d="M1013 35h1v1h1v1h1v1h1v1h-1v1h-1v1h-1v1h-1v-3h-2v-2h2z"/><path class="w" d="M1014 46h2v1h1v1h1v1h1v1h1v1h-1v1h-1v1h-1v1h-1v1h-2v-3h-2v-4h2z"/><path class="b" d="M1015 47h1v1h1v1h1v1h1v1h-1v1h-1v1h-1v1h-1v-3h-2v-2h2z"/><path class="w" d="M1018 29h2v9h-2v-1h-1v-1h-1v-1h-1v-1h-1v-1h1v-1h1v-1h1v-1h1z"/><path class="y" d="M1018 30h1v7h-1v-1h-1v-1h-1v-1h-1v-1h1v-1h1v-1h1z"/><path class="w" d="M1016 59h2v1h1v1h1v1h1v1h1v1h-1v1h-1v1h-1v1h-1v1h-2v-3h-2v-4h2z"/><path class="b" d="M1017 60h1v1h1v1h1v1h1v1h-1v1h-1v1h-1v1h-1v-3h-2v-2h2z"/><path class="w" d="M1020 42h2v1h1v1h1v1h1v1h1v1h-1v1h-1v1h-1v1h-1v1h-2v-3h-2v-4h2z"/><path class="b" d="M1021 43h1v1h1v1h1v1h1v1h-1v1h-1v1h-1v1h-1v-3h-2v-2h2z"/><path class="w" d="M1021 51h2v1h1v1h1v1h1v1h1v1h-1v1h-1v1h-1v1h-1v1h-2v-3h-2v-4h2z"/><path class="b" d="M1022 52h1v1h1v1h1v1h1v1h-1v1h-1v1h-1v1h-1v-3h-2v-2h2z"/><path class="w" d="M1026 46h2v9h-2v-1h-1v-1h-1v-1h-1v-1h-1v-1h1v-1h1v-1h1v-1h1z"/><path class="y" d="M1026 47h1v7h-1v-1h-1v-1h-1v-1h-1v-1h1v-1h1v-1h1z"/><path class="w" d="M1024 55h2v1h1v1h1v1h1v1h1v1h-1v1h-1v1h-1v1h-1v1h-2v-3h-2v-4h2z"/><path class="b" d="M1025 56h1v1h1v1h1v1h1v1h-1v1h-1v1h-1v1h-1v-3h-2v-2h2z"/><path class="w" d="M1028 59h2v1h1v1h1v1h1v1h1v1h-1v1h-1v1h-1v1h-1v1h-2v-3h-2v-4h2z"/><path class="b" d="M1029 60h1v1h1v1h1v1h1v1h-1v1h-1v1h-1v1h-1v-3h-2v-2h2z"/><path class="w" d="M1033 43h2v9h-2v-1h-1v-1h-1v-1h-1v-1h-1v-1h1v-1h1v-1h1v-1h1z"/><path class="y" d="M1033 44h1v7h-1v-1h-1v-1h-1v-1h-1v-1h1v-1h1v-1h1z"/><path class="w" d="M1033 48h2v9h-2v-1h-1v-1h-1v-1h-1v-1h-1v-1h1v-1h1v-1h1v-1h1z"/><path class="y" d="M1033 49h1v7h-1v-1h-1v-1h-1v-1h-1v-1h1v-1h1v-1h1z"/><path class="w" d="M1032 54h2v1h1v1h1v1h1v1h1v1h-1v1h-1v1h-1v1h-1v1h-2v-3h-2v-4h2z"/><path class="b" d="M1033 55h1v1h1v1h1v1h1v1h-1v1h-1v1h-1v1h-1v-3h-2v-2h2z"/><path class="w" d="M1034 68h2v1h1v1h1v1h1v1h1v1h-1v1h-1v1h-1v1h-1v1h-2v-3h-2v-4h2z"/><path class="b" d="M1035 69h1v1h1v1h1v1h1v1h-1v1h-1v1h-1v1h-1v-3h-2v-2h2z"/><path class="w" d="M1038 50h2v9h-2v-1h-1v-1h-1v-1h-1v-1h-1v-1h1v-1h1v-1h1v-1h1z"/><path class="y" d="M1038 51h1v7h-1v-1h-1v-1h-1v-1h-1v-1h1v-1h1v-1h1z"/>
<path d="M1411.5 0V676M0 675.5H1412" stroke="#fff" fill="none"/>
<path d="M1412 19.5h2M1412 68.5h2M1412 117.5h2M1412 166.5h2M1412 215.5h2M1412 264.5h2M1412 313.5h2M1412 362.5h2M1412 411.5h2M1412 460.5h2M1412 509.5h2M1412 558.5h2M1412 607.5h2M1412 656.5h2M42.5 676v3M138.5 676v3M234.5 676v3M330.5 676v3M426.5 676v3M522.5 676v3M618.5 676v3M714.5 676v3M810.5 676v3M906.5 676v3M1002.5 676v3" stroke="#fff" fill="none"/>
<g class="lab"><text x="1418" y="24">4736.20</text><text x="1418" y="73">4730.30</text><text x="1418" y="122">4724.40</text><text x="1418" y="171">4718.60</text><text x="1418" y="220">4712.70</text><text x="1418" y="269">4706.80</text><text x="1418" y="318">4700.90</text><text x="1418" y="367">4695.10</text><text x="1418" y="416">4689.20</text><text x="1418" y="465">4683.30</text><text x="1418" y="514">4677.40</text><text x="1418" y="563">4671.60</text><text x="1418" y="612">4665.70</text><text x="1418" y="661">4659.80</text><text class="tm" x="-54.8" y="691">20 Jan 02:58</text><text class="tm" x="41.2" y="691">20 Jan 03:46</text><text class="tm" x="137.2" y="691">20 Jan 04:34</text><text class="tm" x="233.2" y="691">20 Jan 05:22</text><text class="tm" x="329.2" y="691">20 Jan 06:10</text><text class="tm" x="425.2" y="691">20 Jan 06:58</text><text class="tm" x="521.2" y="691">20 Jan 07:46</text><text class="tm" x="617.2" y="691">20 Jan 08:34</text><text class="tm" x="713.2" y="691">20 Jan 09:22</text><text class="tm" x="809.2" y="691">20 Jan 10:10</text><text class="tm" x="905.2" y="691">20 Jan 10:58</text><text class="tm" x="1001.2" y="691">20 Jan 11:46</text></g>
<rect x="1413" y="66" width="56" height="14" fill="#fff"/>
<text class="bid" x="1418" y="78">4729.74</text>
</svg>
<div class="strip" style="top:699px;height:2px;background:#fff"></div>
<div class="strip" style="top:701px;height:1px;background:#000"></div>
<div class="strip tab"><b><em>e</em>,M1</b><i></i>
<svg style="position:absolute;left:1430px;top:4px" width="40" height="14" viewBox="0 0 40 14"><path d="M6 6L10.8 1.8V10.2Z M35.2 6L30.6 1.8V10.2Z" fill="#a6a6a6"/></svg></div>
<div class="strip" style="top:726px;height:2px;background:#fff"></div>
<div class="strip" style="top:728px;height:3px;background:#f0f0f0"></div>
<div class="strip" style="top:731px;height:1px;background:#a0a0a0"></div>
<div class="strip hdr"><i class="vs" style="left:24px"></i><i class="vs" style="left:154px"></i><i class="vs" style="left:255px"></i><i class="vs" style="left:385px"></i><i class="vs" style="left:529px"></i><i class="vs" style="left:673px"></i><i class="vs" style="left:817px"></i><i class="vs" style="left:961px"></i><i class="vs" style="left:1105px"></i><i class="vs" style="left:1249px"></i><i class="vs" style="left:1470px"></i><span class="hc" style="right:1452px">时间</span><span class="hc" style="right:1322px">类型</span><span class="hc" style="right:1221px">手数</span><span class="hc" style="right:1091px">交易品种</span><span class="hc" style="right:947px">价格</span><span class="hc" style="right:803px">止损</span><span class="hc" style="right:659px">止盈</span><span class="hc" style="right:515px">价格</span><span class="hc" style="right:371px">手续费</span><span class="hc" style="right:227px">库存费</span><span class="hc" style="right:7px">获利</span></div>
<div class="strip" style="top:758px;height:1px;background:#c6c6c6"></div>
<div class="strip r1"><i class="vs" style="left:23px"></i><i class="vs" style="left:153px"></i><i class="vs" style="left:254px"></i><i class="vs" style="left:384px"></i><i class="vs" style="left:528px"></i><i class="vs" style="left:672px"></i><i class="vs" style="left:816px"></i><i class="vs" style="left:960px"></i><i class="vs" style="left:1104px"></i><i class="vs" style="left:1248px"></i><span class="c" style="right:1452px">8:00</span><span class="c" style="right:1321px">buy</span><span class="c" style="right:1220px">0.01</span><span class="c" style="right:1090px">xauusd</span><span class="c" style="right:946px">4731.56</span><span class="c" style="right:802px">4716.96</span><span class="c" style="right:658px">4738.94</span><span class="c" style="right:514px">4729.74</span><span class="c" style="right:370px">-0.10</span><span class="c" style="right:226px">0.00</span><span class="c" style="right:29.5px">-1.82</span>
<svg style="position:absolute;left:1451px;top:6px" width="14" height="13" viewBox="0 0 14 13"><path d="M1 0.8L13 12M13 0.8L1 12" stroke="#7a7a7a" stroke-width="1.4" fill="none"/></svg></div>
<div class="strip" style="top:783px;height:1px;background:#d0d0d0"></div>
<div class="strip r2"><i class="vs" style="left:23px"></i><i class="vs" style="left:153px"></i><i class="vs" style="left:254px"></i><i class="vs" style="left:384px"></i><i class="vs" style="left:528px"></i><i class="vs" style="left:672px"></i><i class="vs" style="left:816px"></i><i class="vs" style="left:960px"></i><i class="vs" style="left:1104px"></i><i class="vs" style="left:1248px"></i><span class="c" style="right:1452px">2:00</span><span class="c" style="right:1321px">buy</span><span class="c" style="right:1220px">0.01</span><span class="c" style="right:1090px">xauusd</span><span class="c" style="right:946px">4729.79</span><span class="c" style="right:802px">4713.69</span><span class="c" style="right:658px">4737.90</span><span class="c" style="right:514px">4729.74</span><span class="c" style="right:370px">-0.10</span><span class="c" style="right:226px">0.00</span><span class="c" style="right:29.5px">-0.05</span>
<svg style="position:absolute;left:1451px;top:6px" width="14" height="13" viewBox="0 0 14 13"><path d="M1 0.8L13 12M13 0.8L1 12" stroke="#7a7a7a" stroke-width="1.4" fill="none"/></svg></div>
<div class="strip sum"><span style="left:7px">可用预付款:</span><span class="n" style="left:89.5px">99 189.13</span><span style="left:168.5px">预付款比例:</span><span class="n" style="left:252px">991991.30%</span><span class="n" style="right:29.59999999999991px">-2.07</span></div>
<div class="strip" style="top:833px;height:8px;background:#fff"></div>
<div class="strip" style="top:841px;height:1px;background:#000"></div>
<div class="strip" style="top:842px;height:3px;background:#f0f0f0"></div>
<svg style="position:absolute;left:1151px;top:775px" width="50" height="46" viewBox="0 0 50 46">
<path d="M18 8.2H32Q40.3 8.2 40.3 17V26Q40.3 35 31 35.2H29Q26 36.5 24 39.6Q23.5 37 23 35.2H18Q10.1 35.2 10.1 27V16Q10.1 8.2 18 8.2Z" fill="#fff"/>
<path d="M35.4 9.3Q39.8 13 39.7 19Q40 28 37.5 31.5Q34 35 28.3 35.4Q26 36.5 24.5 39.2" stroke="#111" stroke-width="1.3" fill="none"/>
<path d="M31 12.3Q24.5 11.3 23.2 14.5Q22 17.5 21.8 20.7M20.7 25L18.5 35.2" stroke="#111" stroke-width="1.3" fill="none"/>
<path d="M16.9 22.6H21.8" stroke="#111" stroke-width="2.4"/><path d="M27.8 21.6h2.3" stroke="#111" stroke-width="1"/>
</svg>
<div class="wm">@WEIMING ZHOU</div>
</body></html>
